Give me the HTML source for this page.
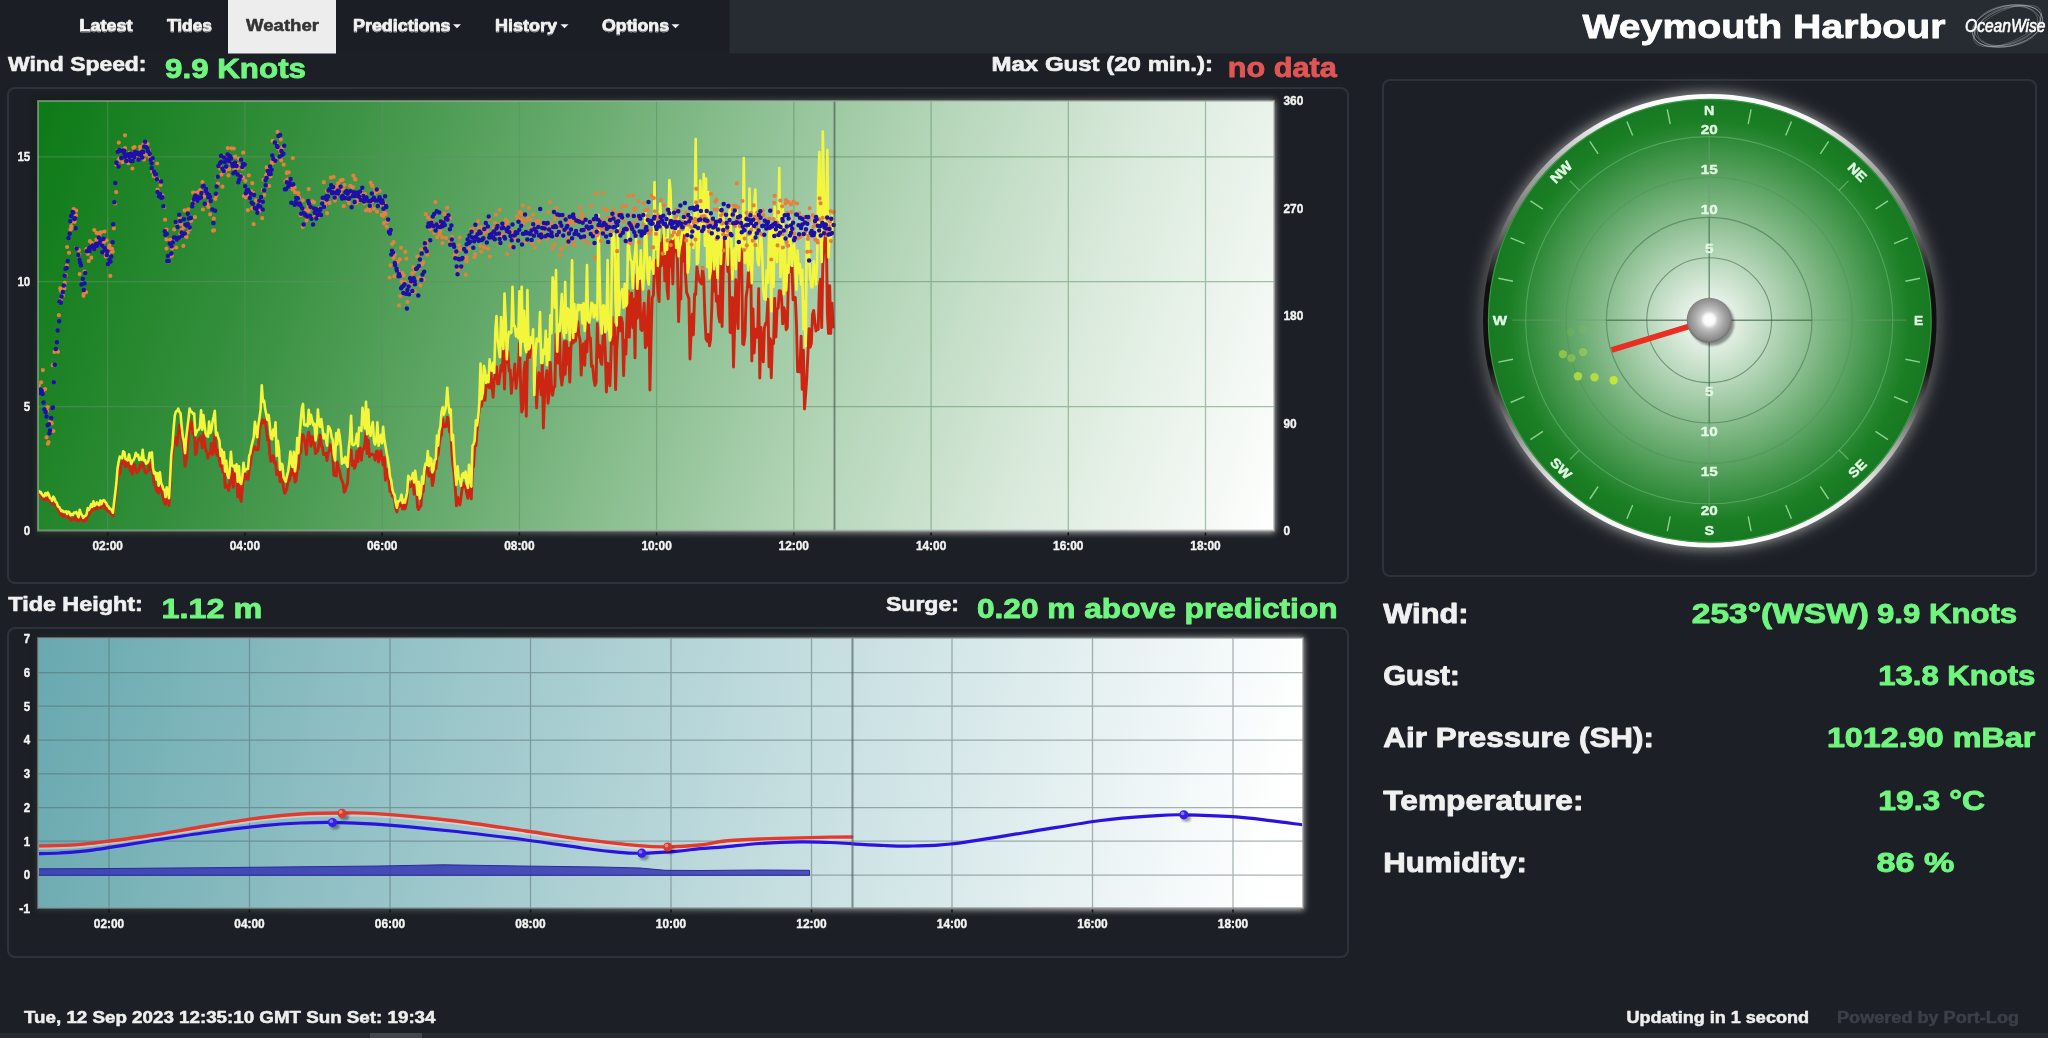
<!DOCTYPE html>
<html><head><meta charset="utf-8"><title>Weymouth Harbour</title>
<style>
html,body{margin:0;padding:0;background:#1c1f25;overflow:hidden;}
body{width:2048px;height:1038px;font-family:"Liberation Sans", sans-serif;}
svg{display:block;position:absolute;left:0;top:0;will-change:transform;}
text{font-family:"Liberation Sans", sans-serif;white-space:pre;}
</style></head><body>
<svg width="2048" height="1038" viewBox="0 0 2048 1038">
<defs>
<linearGradient id="gWind" gradientUnits="userSpaceOnUse" x1="38" y1="101" x2="1275" y2="531">
<stop offset="0" stop-color="#0c7a16"/><stop offset="0.2" stop-color="#358f3d"/><stop offset="0.4" stop-color="#69ac6f"/><stop offset="0.65" stop-color="#b3d5b7"/><stop offset="0.8" stop-color="#d8e9da"/><stop offset="1" stop-color="#ffffff"/>
</linearGradient>
<linearGradient id="gTide" gradientUnits="userSpaceOnUse" x1="38" y1="638" x2="1303" y2="908">
<stop offset="0" stop-color="#68a9af"/><stop offset="0.97" stop-color="#ffffff"/>
</linearGradient>
<radialGradient id="gComp" gradientUnits="userSpaceOnUse" cx="1709.6" cy="320.6" r="222">
<stop offset="0" stop-color="#ffffff"/><stop offset="0.9" stop-color="#1b7f25"/><stop offset="1" stop-color="#177821"/>
</radialGradient>
<linearGradient id="gRim" x1="0" y1="0" x2="0" y2="1">
<stop offset="0" stop-color="#ffffff"/><stop offset="0.06" stop-color="#f4f4f4"/><stop offset="0.15" stop-color="#b0b0b0"/><stop offset="0.3" stop-color="#6a6a6a"/><stop offset="0.42" stop-color="#101010"/><stop offset="0.6" stop-color="#101010"/><stop offset="0.7" stop-color="#666"/><stop offset="0.78" stop-color="#aaa"/><stop offset="0.86" stop-color="#e8e8e8"/><stop offset="1" stop-color="#ffffff"/>
</linearGradient>
<radialGradient id="gHub" cx="0.5" cy="0.48" r="0.52">
<stop offset="0" stop-color="#ffffff"/><stop offset="0.3" stop-color="#d4d4d4"/><stop offset="0.6" stop-color="#ababab"/><stop offset="0.88" stop-color="#8c8c8c"/><stop offset="1" stop-color="#6a6a6a"/>
</radialGradient>
<linearGradient id="gGlowW" x1="0" y1="0" x2="1" y2="0.35"><stop offset="0" stop-color="#0c7a16" stop-opacity="0.25"/><stop offset="0.5" stop-color="#9fd0a3" stop-opacity="0.4"/><stop offset="1" stop-color="#ffffff" stop-opacity="0.75"/></linearGradient>
<linearGradient id="gGlowT" x1="0" y1="0" x2="1" y2="0.2"><stop offset="0" stop-color="#68a9af" stop-opacity="0.2"/><stop offset="0.5" stop-color="#b9d8da" stop-opacity="0.4"/><stop offset="1" stop-color="#ffffff" stop-opacity="0.75"/></linearGradient>
<filter id="fGlow" x="-20%" y="-20%" width="140%" height="140%"><feGaussianBlur stdDeviation="5"/></filter>
<filter id="fGlow2" x="-20%" y="-20%" width="140%" height="140%"><feGaussianBlur stdDeviation="8"/></filter>
<filter id="fShadow" x="-5%" y="-5%" width="110%" height="110%"><feGaussianBlur stdDeviation="3"/></filter>
<filter id="fSoft" x="-50%" y="-50%" width="200%" height="200%"><feGaussianBlur stdDeviation="1.2"/></filter>
<clipPath id="cWind"><rect x="39" y="102" width="1235" height="428"/></clipPath>
<clipPath id="cTide"><rect x="39" y="639" width="1263" height="268"/></clipPath>
</defs>

<rect x="0" y="0" width="2048" height="1038" fill="#1c1f25"/>
<rect x="0" y="0" width="2048" height="53.5" fill="#272b32"/>
<rect x="0" y="0" width="729.5" height="53.5" fill="#1b1e24"/>
<rect x="228" y="0" width="108" height="53.5" fill="#ededed"/>
<rect x="0" y="1033" width="2048" height="5" fill="#26292f"/>
<rect x="370" y="1033" width="52" height="5" fill="#43464c"/>
<text x="79.5" y="32.0" font-size="15.6" font-weight="bold" fill="#000000" textLength="53.0" lengthAdjust="spacingAndGlyphs"  stroke="#f2f2f2" stroke-width="0.50" stroke-linejoin="round">Latest</text><text x="79.5" y="31.0" font-size="15.6" font-weight="bold" fill="#f2f2f2" textLength="53.0" lengthAdjust="spacingAndGlyphs"  stroke="#f2f2f2" stroke-width="0.50" stroke-linejoin="round">Latest</text>
<text x="167.0" y="32.0" font-size="15.6" font-weight="bold" fill="#000000" textLength="45.0" lengthAdjust="spacingAndGlyphs"  stroke="#f2f2f2" stroke-width="0.50" stroke-linejoin="round">Tides</text><text x="167.0" y="31.0" font-size="15.6" font-weight="bold" fill="#f2f2f2" textLength="45.0" lengthAdjust="spacingAndGlyphs"  stroke="#f2f2f2" stroke-width="0.50" stroke-linejoin="round">Tides</text>
<text x="246.0" y="31.0" font-size="15.6" font-weight="bold" fill="#333333" textLength="73.0" lengthAdjust="spacingAndGlyphs"  stroke="#333333" stroke-width="0.50" stroke-linejoin="round">Weather</text>
<text x="353.0" y="32.0" font-size="15.6" font-weight="bold" fill="#000000" textLength="97.5" lengthAdjust="spacingAndGlyphs"  stroke="#f2f2f2" stroke-width="0.50" stroke-linejoin="round">Predictions</text><text x="353.0" y="31.0" font-size="15.6" font-weight="bold" fill="#f2f2f2" textLength="97.5" lengthAdjust="spacingAndGlyphs"  stroke="#f2f2f2" stroke-width="0.50" stroke-linejoin="round">Predictions</text>
<text x="495.0" y="32.0" font-size="15.6" font-weight="bold" fill="#000000" textLength="62.0" lengthAdjust="spacingAndGlyphs"  stroke="#f2f2f2" stroke-width="0.50" stroke-linejoin="round">History</text><text x="495.0" y="31.0" font-size="15.6" font-weight="bold" fill="#f2f2f2" textLength="62.0" lengthAdjust="spacingAndGlyphs"  stroke="#f2f2f2" stroke-width="0.50" stroke-linejoin="round">History</text>
<text x="602.0" y="32.0" font-size="15.6" font-weight="bold" fill="#000000" textLength="67.0" lengthAdjust="spacingAndGlyphs"  stroke="#f2f2f2" stroke-width="0.50" stroke-linejoin="round">Options</text><text x="602.0" y="31.0" font-size="15.6" font-weight="bold" fill="#f2f2f2" textLength="67.0" lengthAdjust="spacingAndGlyphs"  stroke="#f2f2f2" stroke-width="0.50" stroke-linejoin="round">Options</text>
<path d="M453,24.3 h8 l-4,4 z" fill="#f2f2f2"/>
<path d="M560.5,24.3 h8 l-4,4 z" fill="#f2f2f2"/>
<path d="M671.5,24.3 h8 l-4,4 z" fill="#f2f2f2"/>
<text x="1582.5" y="38.0" font-size="33" font-weight="bold" fill="#ffffff" textLength="363.0" lengthAdjust="spacingAndGlyphs"  stroke="#ffffff" stroke-width="0.80" stroke-linejoin="round">Weymouth Harbour</text>
<text x="8.0" y="71.2" font-size="21" font-weight="bold" fill="#f0f0f0" textLength="138.5" lengthAdjust="spacingAndGlyphs"  stroke="#f0f0f0" stroke-width="0.67" stroke-linejoin="round">Wind Speed:</text>
<text x="165.0" y="77.8" font-size="28" font-weight="bold" fill="#70f57f" textLength="141.0" lengthAdjust="spacingAndGlyphs"  stroke="#70f57f" stroke-width="0.90" stroke-linejoin="round">9.9 Knots</text>
<text x="991.5" y="71.2" font-size="21" font-weight="bold" fill="#f0f0f0" textLength="221.5" lengthAdjust="spacingAndGlyphs"  stroke="#f0f0f0" stroke-width="0.67" stroke-linejoin="round">Max Gust (20 min.):</text>
<text x="1227.7" y="77.3" font-size="28" font-weight="bold" fill="#e15555" textLength="109.0" lengthAdjust="spacingAndGlyphs"  stroke="#e15555" stroke-width="0.90" stroke-linejoin="round">no data</text>
<text x="8.3" y="610.8" font-size="21" font-weight="bold" fill="#f0f0f0" textLength="134.5" lengthAdjust="spacingAndGlyphs"  stroke="#f0f0f0" stroke-width="0.67" stroke-linejoin="round">Tide Height:</text>
<text x="161.6" y="617.6" font-size="28" font-weight="bold" fill="#70f57f" textLength="100.7" lengthAdjust="spacingAndGlyphs"  stroke="#70f57f" stroke-width="0.90" stroke-linejoin="round">1.12 m</text>
<text x="886.0" y="610.8" font-size="21" font-weight="bold" fill="#f0f0f0" textLength="72.9" lengthAdjust="spacingAndGlyphs"  stroke="#f0f0f0" stroke-width="0.67" stroke-linejoin="round">Surge:</text>
<text x="976.9" y="617.6" font-size="28" font-weight="bold" fill="#70f57f" textLength="360.7" lengthAdjust="spacingAndGlyphs"  stroke="#70f57f" stroke-width="0.90" stroke-linejoin="round">0.20 m above prediction</text>
<text x="1383.3" y="622.6" font-size="28" font-weight="bold" fill="#f0f0f0" textLength="85.2" lengthAdjust="spacingAndGlyphs"  stroke="#f0f0f0" stroke-width="0.90" stroke-linejoin="round">Wind:</text>
<text x="1383.3" y="685.0" font-size="28" font-weight="bold" fill="#f0f0f0" textLength="76.4" lengthAdjust="spacingAndGlyphs"  stroke="#f0f0f0" stroke-width="0.90" stroke-linejoin="round">Gust:</text>
<text x="1383.3" y="747.3" font-size="28" font-weight="bold" fill="#f0f0f0" textLength="270.7" lengthAdjust="spacingAndGlyphs"  stroke="#f0f0f0" stroke-width="0.90" stroke-linejoin="round">Air Pressure (SH):</text>
<text x="1383.3" y="809.5" font-size="28" font-weight="bold" fill="#f0f0f0" textLength="200.2" lengthAdjust="spacingAndGlyphs"  stroke="#f0f0f0" stroke-width="0.90" stroke-linejoin="round">Temperature:</text>
<text x="1383.3" y="871.5" font-size="28" font-weight="bold" fill="#f0f0f0" textLength="143.7" lengthAdjust="spacingAndGlyphs"  stroke="#f0f0f0" stroke-width="0.90" stroke-linejoin="round">Humidity:</text>
<text x="1691.8" y="622.6" font-size="28" font-weight="bold" fill="#70f57f" textLength="177.2" lengthAdjust="spacingAndGlyphs"  stroke="#70f57f" stroke-width="0.90" stroke-linejoin="round">253°(WSW)</text>
<text x="1877.0" y="622.6" font-size="28" font-weight="bold" fill="#70f57f" textLength="140.2" lengthAdjust="spacingAndGlyphs"  stroke="#70f57f" stroke-width="0.90" stroke-linejoin="round">9.9 Knots</text>
<text x="1878.2" y="685.0" font-size="28" font-weight="bold" fill="#70f57f" textLength="157.2" lengthAdjust="spacingAndGlyphs"  stroke="#70f57f" stroke-width="0.90" stroke-linejoin="round">13.8 Knots</text>
<text x="1826.9" y="747.3" font-size="28" font-weight="bold" fill="#70f57f" textLength="208.5" lengthAdjust="spacingAndGlyphs"  stroke="#70f57f" stroke-width="0.90" stroke-linejoin="round">1012.90 mBar</text>
<text x="1878.2" y="809.5" font-size="28" font-weight="bold" fill="#70f57f" textLength="106.8" lengthAdjust="spacingAndGlyphs"  stroke="#70f57f" stroke-width="0.90" stroke-linejoin="round">19.3 °C</text>
<text x="1876.5" y="871.5" font-size="28" font-weight="bold" fill="#70f57f" textLength="77.8" lengthAdjust="spacingAndGlyphs"  stroke="#70f57f" stroke-width="0.90" stroke-linejoin="round">86 %</text>
<text x="24.0" y="1023.0" font-size="16" font-weight="bold" fill="#eeeeee" textLength="411.5" lengthAdjust="spacingAndGlyphs"  stroke="#eeeeee" stroke-width="0.51" stroke-linejoin="round">Tue, 12 Sep 2023 12:35:10 GMT Sun Set: 19:34</text>
<text x="1626.5" y="1023.0" font-size="16" font-weight="bold" fill="#eeeeee" textLength="182.5" lengthAdjust="spacingAndGlyphs"  stroke="#eeeeee" stroke-width="0.51" stroke-linejoin="round">Updating in 1 second</text>
<text x="1837.0" y="1023.0" font-size="16" font-weight="bold" fill="#3b3f47" textLength="182.0" lengthAdjust="spacingAndGlyphs"  stroke="#3b3f47" stroke-width="0.51" stroke-linejoin="round">Powered by Port-Log</text>
<rect x="8" y="88" width="1340" height="495" rx="7" ry="7" fill="#1c1f25" stroke="#2e323b" stroke-width="2"/>
<rect x="8" y="628" width="1340" height="329" rx="7" ry="7" fill="#1c1f25" stroke="#2e323b" stroke-width="2"/>
<rect x="1383" y="80" width="653" height="496" rx="7" ry="7" fill="#1c1f25" stroke="#2e323b" stroke-width="2"/>
<rect x="36" y="99" width="1240" height="433.5" fill="#000" opacity="0.45" filter="url(#fShadow)"/>
<rect x="37" y="100" width="1238" height="432.5" fill="url(#gGlowW)" filter="url(#fShadow)"/>
<rect x="38" y="101" width="1236" height="429.5" fill="url(#gWind)"/>
<path d="M107.7,101V530.5 M244.9,101V530.5 M382.2,101V530.5 M519.4,101V530.5 M656.6,101V530.5 M793.9,101V530.5 M931.1,101V530.5 M1068.3,101V530.5 M1205.5,101V530.5 M38,156.9H1274 M38,281.7H1274 M38,406.5H1274" stroke="#5f8f65" stroke-opacity="0.55" stroke-width="1.25" fill="none"/>
<g clip-path="url(#cWind)">
<path d="M38.5,494.1 L39.6,495.0 L40.8,494.8 L41.9,497.7 L43.1,499.4 L44.2,499.8 L45.4,497.6 L46.5,499.7 L47.7,498.2 L48.8,498.8 L50.0,501.1 L51.1,502.9 L52.2,503.9 L53.4,503.4 L54.5,505.1 L55.7,504.7 L56.8,505.5 L58.0,509.6 L59.1,511.5 L60.3,513.7 L61.4,514.5 L62.5,516.1 L63.7,516.5 L64.8,513.9 L66.0,515.4 L67.1,517.2 L68.3,515.3 L69.4,517.6 L70.6,520.0 L71.7,519.4 L72.9,519.9 L74.0,518.7 L75.1,517.5 L76.3,520.3 L77.4,517.7 L78.6,521.0 L79.7,517.6 L80.9,519.5 L82.0,518.2 L83.2,521.2 L84.3,520.1 L85.4,520.9 L86.6,518.9 L87.7,514.0 L88.9,514.9 L90.0,510.0 L91.2,511.4 L92.3,510.2 L93.5,507.6 L94.6,509.0 L95.7,509.0 L96.9,508.3 L98.0,506.4 L99.2,507.9 L100.3,505.2 L101.5,507.3 L102.6,503.4 L103.8,503.1 L104.9,507.2 L106.1,509.8 L107.2,508.3 L108.3,511.5 L109.5,512.4 L110.6,513.2 L111.8,513.8 L112.9,516.0 L114.1,507.5 L115.2,499.3 L116.4,487.4 L117.5,476.5 L118.6,469.3 L119.8,474.2 L120.9,464.2 L122.1,463.9 L123.2,459.4 L124.4,458.8 L125.5,466.8 L126.7,464.6 L127.8,465.7 L129.0,460.1 L130.1,470.5 L131.2,471.3 L132.4,474.2 L133.5,464.6 L134.7,464.8 L135.8,470.3 L137.0,472.6 L138.1,471.5 L139.3,468.2 L140.4,464.7 L141.5,466.4 L142.7,462.9 L143.8,467.2 L145.0,472.0 L146.1,473.2 L147.3,471.5 L148.4,470.5 L149.6,462.9 L150.7,469.1 L151.9,465.5 L153.0,474.5 L154.1,484.2 L155.3,484.9 L156.4,491.2 L157.6,487.2 L158.7,493.3 L159.9,483.2 L161.0,487.2 L162.2,492.0 L163.3,499.9 L164.5,502.7 L165.6,504.6 L166.7,497.9 L167.9,498.3 L169.0,505.2 L170.2,482.1 L171.3,463.2 L172.5,454.0 L173.6,443.1 L174.8,441.2 L175.9,437.3 L177.0,445.4 L178.2,434.7 L179.3,425.5 L180.5,429.4 L181.6,435.1 L182.8,445.0 L183.9,452.0 L185.1,466.3 L186.2,460.2 L187.4,448.5 L188.5,437.0 L189.6,419.7 L190.8,428.9 L191.9,422.8 L193.1,433.5 L194.2,431.0 L195.4,454.6 L196.5,452.0 L197.7,441.7 L198.8,439.2 L199.9,437.9 L201.1,436.5 L202.2,447.9 L203.4,433.7 L204.5,441.4 L205.7,449.9 L206.8,452.4 L208.0,458.2 L209.1,453.3 L210.3,453.6 L211.4,443.5 L212.5,454.7 L213.7,449.0 L214.8,433.9 L216.0,450.9 L217.1,455.5 L218.3,449.9 L219.4,460.3 L220.6,466.6 L221.7,460.0 L222.8,472.1 L224.0,464.7 L225.1,487.5 L226.3,486.3 L227.4,485.1 L228.6,490.5 L229.7,484.1 L230.9,464.9 L232.0,474.0 L233.2,487.1 L234.3,472.2 L235.4,478.9 L236.6,477.1 L237.7,497.0 L238.9,480.8 L240.0,496.5 L241.2,501.5 L242.3,489.2 L243.5,471.0 L244.6,479.3 L245.7,474.7 L246.9,478.5 L248.0,479.3 L249.2,469.4 L250.3,465.0 L251.5,454.9 L252.6,451.5 L253.8,448.9 L254.9,446.8 L256.1,449.4 L257.2,449.9 L258.3,449.3 L259.5,429.1 L260.6,425.9 L261.8,422.1 L262.9,419.7 L264.1,423.0 L265.2,420.6 L266.4,428.7 L267.5,440.0 L268.6,437.1 L269.8,454.5 L270.9,461.4 L272.1,458.3 L273.2,455.5 L274.4,463.1 L275.5,461.8 L276.7,474.7 L277.8,473.3 L279.0,470.7 L280.1,481.8 L281.2,471.4 L282.4,479.8 L283.5,487.8 L284.7,493.3 L285.8,491.6 L287.0,487.9 L288.1,479.7 L289.3,480.4 L290.4,475.4 L291.5,469.3 L292.7,474.8 L293.8,469.3 L295.0,482.0 L296.1,480.6 L297.3,468.0 L298.4,468.4 L299.6,445.1 L300.7,453.0 L301.9,435.2 L303.0,434.8 L304.1,438.8 L305.3,444.4 L306.4,454.5 L307.6,437.9 L308.7,432.2 L309.9,438.1 L311.0,446.3 L312.2,436.6 L313.3,440.9 L314.4,444.7 L315.6,453.6 L316.7,452.0 L317.9,450.5 L319.0,443.2 L320.2,435.3 L321.3,445.5 L322.5,447.5 L323.6,454.6 L324.7,454.3 L325.9,453.4 L327.0,460.6 L328.2,452.2 L329.3,451.1 L330.5,444.6 L331.6,446.7 L332.8,456.6 L333.9,475.1 L335.1,475.6 L336.2,476.0 L337.3,462.0 L338.5,468.2 L339.6,470.9 L340.8,477.6 L341.9,480.4 L343.1,483.5 L344.2,492.3 L345.4,490.5 L346.5,486.0 L347.6,482.7 L348.8,462.2 L349.9,459.8 L351.1,449.9 L352.2,465.5 L353.4,461.0 L354.5,468.2 L355.7,465.1 L356.8,451.5 L358.0,461.6 L359.1,449.1 L360.2,447.8 L361.4,460.2 L362.5,449.4 L363.7,449.2 L364.8,444.0 L366.0,432.4 L367.1,453.6 L368.3,440.1 L369.4,456.7 L370.5,454.8 L371.7,453.8 L372.8,454.9 L374.0,455.1 L375.1,460.2 L376.3,451.4 L377.4,451.0 L378.6,462.0 L379.7,457.0 L380.9,450.7 L382.0,458.5 L383.1,465.0 L384.3,457.5 L385.4,480.2 L386.6,469.3 L387.7,474.3 L388.9,480.5 L390.0,491.5 L391.2,486.2 L392.3,496.2 L393.4,496.0 L394.6,500.0 L395.7,508.1 L396.9,511.9 L398.0,504.1 L399.2,506.8 L400.3,505.2 L401.5,500.3 L402.6,509.0 L403.8,505.2 L404.9,508.9 L406.0,505.2 L407.2,497.3 L408.3,483.3 L409.5,487.0 L410.6,486.5 L411.8,485.1 L412.9,478.4 L414.1,494.2 L415.2,488.9 L416.3,486.4 L417.5,507.0 L418.6,509.6 L419.8,506.4 L420.9,506.1 L422.1,491.4 L423.2,491.8 L424.4,476.7 L425.5,472.7 L426.7,471.7 L427.8,466.7 L428.9,476.2 L430.1,474.7 L431.2,472.8 L432.4,485.6 L433.5,480.2 L434.7,466.7 L435.8,468.5 L437.0,456.4 L438.1,454.9 L439.2,444.2 L440.4,436.6 L441.5,434.9 L442.7,418.9 L443.8,426.7 L445.0,426.7 L446.1,426.6 L447.3,417.1 L448.4,418.0 L449.6,432.1 L450.7,430.0 L451.8,450.8 L453.0,465.7 L454.1,473.4 L455.3,488.6 L456.4,505.9 L457.6,497.3 L458.7,501.6 L459.9,504.9 L461.0,497.4 L462.1,488.8 L463.3,483.1 L464.4,486.9 L465.6,486.7 L466.7,493.3 L467.9,498.3 L469.0,482.6 L470.2,491.0 L471.3,498.9 L472.5,467.8 L473.6,466.8 L474.7,445.0 L475.9,445.7 L477.0,431.1 L478.2,419.4 L479.3,408.8 L480.5,405.4 L481.6,406.2 L482.8,395.4 L483.9,399.0 L485.0,400.4 L486.2,384.4 L487.3,380.7 L488.5,386.5 L489.6,387.9 L490.8,371.6 L491.9,385.4 L493.1,397.2 L494.2,380.2 L495.4,373.7 L496.5,366.8 L497.6,383.8 L498.8,383.9 L499.9,375.3 L501.1,365.4 L502.2,370.9 L503.4,351.3 L504.5,389.0 L505.7,342.6 L506.8,362.8 L507.9,351.2 L509.1,371.1 L510.2,369.8 L511.4,393.4 L512.5,378.9 L513.7,379.3 L514.8,364.0 L516.0,388.4 L517.1,377.4 L518.3,372.5 L519.4,343.3 L520.5,381.2 L521.7,412.1 L522.8,408.9 L524.0,371.5 L525.1,362.1 L526.3,416.3 L527.4,358.3 L528.6,350.9 L529.7,357.4 L530.8,338.7 L532.0,344.4 L533.1,350.3 L534.3,374.2 L535.4,367.5 L536.6,407.9 L537.7,385.3 L538.9,372.7 L540.0,382.0 L541.2,394.9 L542.3,364.4 L543.4,428.0 L544.6,394.7 L545.7,378.7 L546.9,370.6 L548.0,403.3 L549.2,392.7 L550.3,362.4 L551.5,386.5 L552.6,395.3 L553.7,387.5 L554.9,386.4 L556.0,334.5 L557.2,361.6 L558.3,363.0 L559.5,332.6 L560.6,374.6 L561.8,385.0 L562.9,376.4 L564.1,341.8 L565.2,374.4 L566.3,341.1 L567.5,364.0 L568.6,348.2 L569.8,382.1 L570.9,348.1 L572.1,335.1 L573.2,343.0 L574.4,320.4 L575.5,341.1 L576.6,330.4 L577.8,321.8 L578.9,334.7 L580.1,340.1 L581.2,375.1 L582.4,349.6 L583.5,343.6 L584.7,365.3 L585.8,341.2 L587.0,351.8 L588.1,321.7 L589.2,338.5 L590.4,338.1 L591.5,366.5 L592.7,365.8 L593.8,378.7 L595.0,385.4 L596.1,382.3 L597.3,323.6 L598.4,356.8 L599.5,345.3 L600.7,361.6 L601.8,364.4 L603.0,337.0 L604.1,326.2 L605.3,352.9 L606.4,392.0 L607.6,363.2 L608.7,368.4 L609.9,385.7 L611.0,354.6 L612.1,317.2 L613.3,343.7 L614.4,325.0 L615.6,389.6 L616.7,349.6 L617.9,331.3 L619.0,316.4 L620.2,330.8 L621.3,317.7 L622.4,322.6 L623.6,375.6 L624.7,340.5 L625.9,354.1 L627.0,318.2 L628.2,290.6 L629.3,337.3 L630.5,304.9 L631.6,292.9 L632.8,327.8 L633.9,299.3 L635.0,357.9 L636.2,275.2 L637.3,318.2 L638.5,309.9 L639.6,280.3 L640.8,329.1 L641.9,330.5 L643.1,316.4 L644.2,303.3 L645.3,347.8 L646.5,345.6 L647.6,316.3 L648.8,291.0 L649.9,390.0 L651.1,336.5 L652.2,298.0 L653.4,294.9 L654.5,266.1 L655.7,260.4 L656.8,270.1 L657.9,291.0 L659.1,301.6 L660.2,243.5 L661.4,265.7 L662.5,242.6 L663.7,234.6 L664.8,280.9 L666.0,239.7 L667.1,288.9 L668.2,298.8 L669.4,242.4 L670.5,266.3 L671.7,240.9 L672.8,284.0 L674.0,233.4 L675.1,229.4 L676.3,249.4 L677.4,259.6 L678.6,321.6 L679.7,289.7 L680.8,299.0 L682.0,233.4 L683.1,261.1 L684.3,234.7 L685.4,273.2 L686.6,292.5 L687.7,295.1 L688.9,298.7 L690.0,359.0 L691.1,333.9 L692.3,314.1 L693.4,334.8 L694.6,294.0 L695.7,294.5 L696.9,267.0 L698.0,274.6 L699.2,280.1 L700.3,282.4 L701.5,283.9 L702.6,267.6 L703.7,278.4 L704.9,316.1 L706.0,338.8 L707.2,341.2 L708.3,334.5 L709.5,345.8 L710.6,338.9 L711.8,307.3 L712.9,262.9 L714.0,291.3 L715.2,267.1 L716.3,301.2 L717.5,295.9 L718.6,315.8 L719.8,321.9 L720.9,265.4 L722.1,326.5 L723.2,271.9 L724.4,230.0 L725.5,227.9 L726.6,242.4 L727.8,271.5 L728.9,248.9 L730.1,332.4 L731.2,332.8 L732.4,297.5 L733.5,367.0 L734.7,323.7 L735.8,279.7 L736.9,309.7 L738.1,328.6 L739.2,262.3 L740.4,254.8 L741.5,244.2 L742.7,343.8 L743.8,344.6 L745.0,335.1 L746.1,297.2 L747.3,288.7 L748.4,272.0 L749.5,286.7 L750.7,256.7 L751.8,361.0 L753.0,309.0 L754.1,353.0 L755.3,333.5 L756.4,328.9 L757.6,337.2 L758.7,288.6 L759.8,378.0 L761.0,327.5 L762.1,349.8 L763.3,361.9 L764.4,327.9 L765.6,323.6 L766.7,321.7 L767.9,299.2 L769.0,366.7 L770.2,338.7 L771.3,377.7 L772.4,341.0 L773.6,343.5 L774.7,298.4 L775.9,337.0 L777.0,309.1 L778.2,308.1 L779.3,290.7 L780.5,291.0 L781.6,298.3 L782.7,323.9 L783.9,307.8 L785.0,311.7 L786.2,329.7 L787.3,327.6 L788.5,274.1 L789.6,267.4 L790.8,271.7 L791.9,267.3 L793.1,299.9 L794.2,297.7 L795.3,297.4 L796.5,324.5 L797.6,371.7 L798.8,361.4 L799.9,372.1 L801.1,336.1 L802.2,389.4 L803.4,350.2 L804.5,409.0 L805.6,394.9 L806.8,377.3 L807.9,353.7 L809.1,328.7 L810.2,347.2 L811.4,343.2 L812.5,314.7 L813.7,310.4 L814.8,321.1 L816.0,331.0 L817.1,326.5 L818.2,329.5 L819.4,286.3 L820.5,279.1 L821.7,327.6 L822.8,265.7 L824.0,246.7 L825.1,238.0 L826.3,232.2 L827.4,313.8 L828.5,333.5 L829.7,285.7 L830.8,333.5 L832.0,303.2 L833.1,328.3" fill="none" stroke="#cc2612" stroke-width="2.9" stroke-linejoin="round"/>
<path d="M38.5,490.5 L39.6,492.3 L40.8,492.1 L41.9,494.3 L43.1,495.8 L44.2,496.4 L45.4,493.1 L46.5,495.4 L47.7,492.5 L48.8,494.6 L50.0,498.1 L51.1,498.6 L52.2,500.9 L53.4,496.7 L54.5,498.4 L55.7,501.9 L56.8,502.8 L58.0,506.6 L59.1,506.9 L60.3,509.2 L61.4,511.1 L62.5,510.5 L63.7,511.9 L64.8,511.9 L66.0,511.3 L67.1,514.0 L68.3,511.5 L69.4,512.3 L70.6,515.4 L71.7,514.1 L72.9,514.9 L74.0,512.5 L75.1,512.9 L76.3,511.9 L77.4,514.5 L78.6,517.2 L79.7,509.7 L80.9,513.6 L82.0,514.9 L83.2,517.8 L84.3,516.2 L85.4,516.0 L86.6,514.2 L87.7,508.1 L88.9,509.9 L90.0,507.3 L91.2,504.2 L92.3,506.8 L93.5,501.3 L94.6,505.7 L95.7,504.6 L96.9,502.4 L98.0,504.2 L99.2,505.2 L100.3,500.6 L101.5,504.1 L102.6,500.8 L103.8,500.0 L104.9,501.6 L106.1,502.8 L107.2,505.5 L108.3,506.4 L109.5,508.7 L110.6,508.9 L111.8,510.1 L112.9,512.7 L114.1,502.2 L115.2,493.4 L116.4,482.5 L117.5,468.6 L118.6,462.0 L119.8,456.5 L120.9,457.3 L122.1,458.4 L123.2,451.4 L124.4,452.3 L125.5,459.1 L126.7,459.2 L127.8,460.4 L129.0,454.4 L130.1,459.4 L131.2,464.0 L132.4,460.6 L133.5,460.2 L134.7,457.5 L135.8,452.7 L137.0,455.8 L138.1,454.9 L139.3,460.0 L140.4,457.9 L141.5,459.6 L142.7,449.8 L143.8,460.4 L145.0,460.0 L146.1,463.6 L147.3,462.9 L148.4,461.0 L149.6,452.7 L150.7,457.5 L151.9,452.3 L153.0,468.1 L154.1,473.4 L155.3,472.3 L156.4,479.5 L157.6,473.2 L158.7,485.7 L159.9,472.3 L161.0,482.5 L162.2,485.4 L163.3,489.2 L164.5,490.1 L165.6,497.0 L166.7,487.4 L167.9,491.0 L169.0,498.2 L170.2,476.4 L171.3,454.9 L172.5,444.7 L173.6,428.7 L174.8,415.7 L175.9,411.5 L177.0,411.3 L178.2,408.7 L179.3,411.6 L180.5,413.2 L181.6,425.5 L182.8,436.7 L183.9,441.3 L185.1,453.1 L186.2,437.4 L187.4,427.8 L188.5,419.0 L189.6,408.5 L190.8,411.4 L191.9,412.0 L193.1,413.7 L194.2,413.6 L195.4,435.3 L196.5,432.3 L197.7,430.1 L198.8,429.8 L199.9,426.7 L201.1,410.3 L202.2,429.8 L203.4,415.0 L204.5,424.3 L205.7,433.8 L206.8,435.9 L208.0,436.7 L209.1,421.6 L210.3,433.0 L211.4,430.0 L212.5,421.9 L213.7,416.6 L214.8,410.7 L216.0,435.1 L217.1,432.7 L218.3,437.8 L219.4,440.4 L220.6,456.0 L221.7,449.5 L222.8,463.3 L224.0,452.0 L225.1,471.5 L226.3,460.9 L227.4,474.5 L228.6,478.0 L229.7,471.2 L230.9,451.9 L232.0,465.5 L233.2,466.5 L234.3,465.6 L235.4,471.3 L236.6,464.4 L237.7,481.7 L238.9,466.2 L240.0,482.3 L241.2,483.9 L242.3,477.4 L243.5,462.9 L244.6,471.4 L245.7,469.5 L246.9,468.9 L248.0,468.9 L249.2,455.8 L250.3,453.2 L251.5,446.0 L252.6,441.7 L253.8,436.7 L254.9,421.9 L256.1,429.3 L257.2,437.3 L258.3,425.4 L259.5,417.5 L260.6,409.4 L261.8,385.3 L262.9,401.6 L264.1,400.7 L265.2,409.3 L266.4,415.0 L267.5,420.0 L268.6,414.9 L269.8,425.5 L270.9,438.2 L272.1,439.4 L273.2,429.5 L274.4,435.6 L275.5,422.4 L276.7,456.0 L277.8,440.8 L279.0,449.6 L280.1,470.0 L281.2,463.5 L282.4,464.5 L283.5,477.0 L284.7,479.9 L285.8,481.6 L287.0,475.3 L288.1,471.5 L289.3,462.8 L290.4,451.5 L291.5,462.6 L292.7,466.8 L293.8,451.8 L295.0,471.3 L296.1,462.0 L297.3,438.0 L298.4,453.1 L299.6,435.7 L300.7,421.0 L301.9,408.1 L303.0,403.9 L304.1,424.9 L305.3,425.4 L306.4,424.5 L307.6,426.1 L308.7,409.9 L309.9,424.0 L311.0,414.9 L312.2,420.9 L313.3,425.3 L314.4,423.5 L315.6,440.4 L316.7,432.7 L317.9,409.6 L319.0,423.6 L320.2,426.7 L321.3,419.1 L322.5,428.6 L323.6,438.4 L324.7,434.2 L325.9,438.9 L327.0,445.6 L328.2,426.2 L329.3,427.4 L330.5,430.2 L331.6,437.0 L332.8,440.3 L333.9,455.0 L335.1,460.5 L336.2,433.1 L337.3,444.5 L338.5,429.6 L339.6,435.4 L340.8,446.3 L341.9,463.7 L343.1,458.7 L344.2,462.6 L345.4,456.9 L346.5,464.0 L347.6,466.9 L348.8,447.4 L349.9,438.0 L351.1,415.9 L352.2,444.4 L353.4,445.1 L354.5,444.4 L355.7,442.5 L356.8,433.9 L358.0,446.1 L359.1,427.6 L360.2,429.8 L361.4,430.9 L362.5,407.9 L363.7,418.9 L364.8,428.5 L366.0,401.9 L367.1,434.1 L368.3,409.6 L369.4,432.6 L370.5,435.9 L371.7,427.5 L372.8,422.1 L374.0,441.0 L375.1,444.5 L376.3,440.4 L377.4,422.4 L378.6,445.8 L379.7,439.1 L380.9,434.9 L382.0,443.3 L383.1,426.9 L384.3,439.0 L385.4,445.6 L386.6,452.7 L387.7,458.3 L388.9,466.2 L390.0,476.9 L391.2,480.5 L392.3,489.2 L393.4,493.0 L394.6,494.9 L395.7,502.5 L396.9,507.7 L398.0,501.3 L399.2,501.3 L400.3,499.5 L401.5,494.5 L402.6,503.0 L403.8,500.0 L404.9,502.6 L406.0,497.6 L407.2,492.2 L408.3,475.8 L409.5,478.2 L410.6,479.4 L411.8,478.3 L412.9,473.1 L414.1,482.4 L415.2,470.8 L416.3,479.5 L417.5,494.7 L418.6,481.7 L419.8,498.5 L420.9,493.0 L422.1,476.5 L423.2,483.6 L424.4,469.1 L425.5,463.5 L426.7,464.6 L427.8,451.1 L428.9,466.0 L430.1,457.9 L431.2,459.1 L432.4,472.4 L433.5,469.5 L434.7,459.9 L435.8,459.2 L437.0,435.6 L438.1,445.6 L439.2,430.9 L440.4,426.6 L441.5,412.2 L442.7,407.3 L443.8,414.6 L445.0,410.9 L446.1,404.7 L447.3,387.7 L448.4,403.8 L449.6,413.1 L450.7,409.4 L451.8,440.2 L453.0,434.7 L454.1,455.1 L455.3,472.2 L456.4,484.9 L457.6,466.4 L458.7,478.5 L459.9,479.5 L461.0,485.7 L462.1,474.7 L463.3,473.1 L464.4,478.0 L465.6,471.5 L466.7,483.5 L467.9,487.9 L469.0,464.7 L470.2,478.6 L471.3,486.6 L472.5,445.7 L473.6,444.3 L474.7,440.1 L475.9,420.3 L477.0,425.5 L478.2,416.6 L479.3,403.3 L480.5,363.5 L481.6,399.1 L482.8,392.4 L483.9,365.8 L485.0,370.8 L486.2,382.9 L487.3,375.6 L488.5,382.2 L489.6,359.4 L490.8,370.1 L491.9,370.6 L493.1,362.8 L494.2,372.8 L495.4,329.9 L496.5,316.1 L497.6,338.9 L498.8,349.2 L499.9,357.3 L501.1,317.0 L502.2,340.5 L503.4,349.0 L504.5,293.5 L505.7,319.4 L506.8,359.3 L507.9,338.9 L509.1,331.9 L510.2,333.5 L511.4,332.4 L512.5,286.8 L513.7,325.9 L514.8,326.1 L516.0,336.4 L517.1,329.0 L518.3,338.1 L519.4,291.2 L520.5,355.5 L521.7,286.8 L522.8,341.5 L524.0,310.7 L525.1,346.3 L526.3,352.2 L527.4,290.1 L528.6,349.4 L529.7,347.7 L530.8,337.2 L532.0,342.9 L533.1,329.2 L534.3,395.0 L535.4,357.5 L536.6,338.8 L537.7,338.9 L538.9,341.3 L540.0,312.0 L541.2,362.9 L542.3,362.9 L543.4,349.7 L544.6,353.7 L545.7,330.8 L546.9,365.2 L548.0,339.3 L549.2,359.8 L550.3,315.4 L551.5,333.2 L552.6,277.3 L553.7,288.4 L554.9,307.7 L556.0,270.1 L557.2,351.6 L558.3,324.9 L559.5,331.1 L560.6,315.8 L561.8,294.1 L562.9,328.5 L564.1,337.6 L565.2,282.1 L566.3,332.6 L567.5,308.3 L568.6,310.1 L569.8,340.1 L570.9,315.4 L572.1,260.3 L573.2,337.9 L574.4,304.1 L575.5,331.7 L576.6,320.5 L577.8,304.9 L578.9,309.9 L580.1,305.0 L581.2,305.0 L582.4,323.5 L583.5,303.3 L584.7,330.9 L585.8,315.1 L587.0,265.0 L588.1,320.2 L589.2,322.5 L590.4,315.7 L591.5,302.8 L592.7,303.8 L593.8,317.5 L595.0,305.4 L596.1,312.9 L597.3,319.8 L598.4,215.0 L599.5,271.8 L600.7,322.7 L601.8,333.5 L603.0,305.5 L604.1,305.6 L605.3,332.2 L606.4,329.7 L607.6,260.0 L608.7,322.7 L609.9,340.4 L611.0,335.5 L612.1,235.0 L613.3,233.3 L614.4,238.3 L615.6,304.1 L616.7,325.4 L617.9,226.4 L619.0,314.9 L620.2,294.6 L621.3,292.2 L622.4,289.0 L623.6,307.7 L624.7,283.7 L625.9,306.3 L627.0,303.6 L628.2,225.3 L629.3,250.6 L630.5,259.6 L631.6,261.6 L632.8,288.2 L633.9,263.6 L635.0,253.5 L636.2,238.4 L637.3,288.8 L638.5,267.9 L639.6,278.8 L640.8,250.3 L641.9,277.0 L643.1,289.5 L644.2,267.2 L645.3,211.3 L646.5,239.8 L647.6,278.0 L648.8,284.4 L649.9,257.4 L651.1,268.2 L652.2,261.9 L653.4,273.7 L654.5,182.0 L655.7,249.2 L656.8,214.4 L657.9,265.6 L659.1,233.8 L660.2,203.7 L661.4,225.9 L662.5,222.7 L663.7,224.4 L664.8,253.8 L666.0,238.2 L667.1,249.7 L668.2,227.0 L669.4,180.0 L670.5,190.4 L671.7,231.4 L672.8,238.9 L674.0,231.9 L675.1,227.9 L676.3,247.9 L677.4,217.1 L678.6,256.2 L679.7,247.8 L680.8,243.0 L682.0,231.9 L683.1,217.3 L684.3,233.2 L685.4,225.6 L686.6,217.6 L687.7,272.6 L688.9,265.7 L690.0,214.5 L691.1,216.3 L692.3,228.8 L693.4,248.0 L694.6,217.4 L695.7,139.0 L696.9,263.9 L698.0,263.2 L699.2,237.4 L700.3,180.5 L701.5,208.7 L702.6,228.8 L703.7,174.0 L704.9,245.7 L706.0,178.6 L707.2,266.9 L708.3,192.0 L709.5,278.4 L710.6,271.3 L711.8,228.4 L712.9,226.4 L714.0,269.2 L715.2,219.3 L716.3,253.2 L717.5,278.0 L718.6,232.7 L719.8,208.1 L720.9,263.9 L722.1,223.5 L723.2,216.9 L724.4,228.5 L725.5,226.4 L726.6,240.9 L727.8,264.6 L728.9,219.2 L730.1,207.1 L731.2,235.4 L732.4,278.9 L733.5,252.2 L734.7,248.4 L735.8,269.1 L736.9,210.4 L738.1,234.1 L739.2,260.8 L740.4,229.7 L741.5,242.7 L742.7,247.4 L743.8,158.0 L745.0,263.0 L746.1,261.9 L747.3,250.5 L748.4,270.5 L749.5,188.5 L750.7,254.5 L751.8,283.1 L753.0,240.5 L754.1,206.3 L755.3,189.6 L756.4,228.2 L757.6,260.8 L758.7,265.3 L759.8,250.3 L761.0,230.8 L762.1,251.2 L763.3,290.3 L764.4,298.9 L765.6,299.7 L766.7,270.6 L767.9,282.6 L769.0,235.3 L770.2,226.9 L771.3,311.2 L772.4,224.1 L773.6,286.8 L774.7,206.7 L775.9,247.0 L777.0,262.0 L778.2,235.5 L779.3,168.0 L780.5,276.9 L781.6,258.1 L782.7,204.8 L783.9,294.2 L785.0,248.5 L786.2,290.3 L787.3,265.6 L788.5,272.6 L789.6,219.3 L790.8,248.4 L791.9,265.8 L793.1,245.4 L794.2,244.2 L795.3,265.9 L796.5,289.7 L797.6,250.6 L798.8,272.9 L799.9,264.4 L801.1,284.6 L802.2,269.7 L803.4,329.4 L804.5,301.4 L805.6,346.1 L806.8,233.0 L807.9,235.5 L809.1,255.0 L810.2,275.8 L811.4,287.3 L812.5,287.2 L813.7,261.3 L814.8,269.0 L816.0,284.5 L817.1,262.6 L818.2,187.1 L819.4,152.0 L820.5,233.4 L821.7,262.0 L822.8,131.5 L824.0,191.4 L825.1,232.8 L826.3,225.9 L827.4,150.0 L828.5,257.2 L829.7,226.6 L830.8,237.4 L832.0,216.1 L833.1,232.9" fill="none" stroke="#f4f63c" stroke-width="2.6" stroke-linejoin="round"/>
<path d="M38.7,385.6h0M40.7,389.7h0M41.2,382.3h0M42.9,370.1h0M42.9,390.3h0M45.2,389.1h0M47.1,411.1h0M47.6,407.1h0M46.5,437.3h0M47.9,443.7h0M48.6,442.1h0M49.7,422.0h0M51.8,423.2h0M53.4,431.0h0M54.2,382.3h0M52.8,365.2h0M54.5,352.0h0M57.0,350.9h0M58.0,351.8h0M58.9,315.2h0M60.0,302.2h0M60.7,290.8h0M60.2,288.4h0M60.5,300.0h0M62.8,295.7h0M64.8,282.9h0M65.7,275.2h0M64.4,288.3h0M66.9,265.5h0M69.0,252.8h0M67.1,247.0h0M70.5,229.4h0M71.2,226.2h0M71.5,221.9h0M72.0,227.9h0M74.7,221.8h0M73.7,209.1h0M76.0,215.3h0M76.2,210.7h0M76.1,248.1h0M78.9,250.2h0M79.3,254.5h0M79.0,258.9h0M79.7,274.1h0M83.0,279.7h0M83.6,294.1h0M83.5,295.8h0M86.0,292.2h0M84.5,271.5h0M86.4,249.1h0M88.8,261.0h0M87.3,252.7h0M87.9,253.8h0M91.7,242.8h0M89.9,241.2h0M91.3,257.7h0M94.3,230.0h0M94.8,248.8h0M96.5,239.5h0M96.5,241.7h0M97.7,244.5h0M96.6,232.9h0M99.4,235.7h0M100.3,232.5h0M101.7,245.8h0M101.1,232.3h0M103.7,242.4h0M104.6,231.5h0M105.8,256.6h0M106.7,240.3h0M105.8,254.0h0M108.6,248.1h0M109.5,245.4h0M110.3,275.9h0M109.1,252.8h0M112.0,248.8h0M112.7,251.7h0M113.9,228.3h0M115.0,203.4h0M116.2,192.1h0M116.3,164.7h0M117.6,165.0h0M118.0,150.6h0M118.5,160.6h0M118.8,142.6h0M119.3,158.6h0M121.7,149.5h0M122.4,162.1h0M125.0,135.3h0M123.6,151.1h0M126.6,154.6h0M125.1,148.1h0M128.8,157.2h0M129.7,152.6h0M128.3,163.2h0M128.9,157.0h0M132.4,168.5h0M132.8,158.3h0M132.0,153.0h0M133.4,147.8h0M134.5,147.1h0M135.0,155.0h0M135.4,157.9h0M139.1,152.9h0M140.0,146.8h0M141.0,155.4h0M140.2,150.2h0M140.6,156.0h0M142.8,155.6h0M143.3,144.6h0M144.0,159.6h0M146.7,143.3h0M147.6,144.1h0M146.7,154.7h0M149.8,155.6h0M148.6,149.8h0M149.6,157.8h0M150.7,157.3h0M152.2,160.0h0M152.2,171.5h0M154.8,172.8h0M153.7,175.9h0M155.0,176.5h0M157.1,163.5h0M157.5,189.5h0M158.3,192.0h0M158.2,179.4h0M159.9,194.1h0M160.6,185.0h0M162.6,195.7h0M164.1,207.0h0M165.1,219.7h0M166.5,229.5h0M166.4,239.5h0M166.5,248.6h0M169.2,255.8h0M168.3,261.7h0M170.2,239.8h0M171.8,255.8h0M172.1,248.5h0M171.9,244.3h0M174.2,229.4h0M176.2,247.5h0M175.9,239.4h0M176.3,222.7h0M179.2,238.0h0M179.7,217.8h0M181.0,224.2h0M180.2,233.2h0M181.6,230.2h0M183.3,245.9h0M184.6,210.4h0M183.7,227.5h0M186.6,237.0h0M186.1,236.6h0M187.7,232.5h0M188.2,209.3h0M188.1,226.3h0M189.8,229.2h0M191.2,220.9h0M192.5,201.6h0M193.1,192.7h0M193.1,204.3h0M195.1,200.9h0M195.0,217.2h0M198.2,200.2h0M196.4,192.8h0M198.3,199.2h0M198.8,191.9h0M200.1,190.0h0M202.5,182.2h0M203.2,192.2h0M204.0,196.6h0M202.9,209.5h0M206.7,188.9h0M207.4,204.8h0M207.1,204.3h0M208.3,207.1h0M210.1,214.3h0M209.5,201.1h0M209.8,199.6h0M213.0,230.7h0M214.1,230.3h0M213.8,218.7h0M216.3,195.5h0M215.4,198.8h0M218.0,183.7h0M217.3,177.0h0M219.7,166.2h0M219.9,168.6h0M221.4,174.7h0M222.4,186.7h0M223.0,172.4h0M223.1,156.7h0M224.3,169.8h0M225.6,170.7h0M224.8,156.5h0M227.7,148.1h0M228.4,175.4h0M229.2,169.1h0M231.5,148.3h0M229.9,162.2h0M230.9,163.4h0M233.8,148.5h0M233.3,163.7h0M234.0,168.3h0M235.2,156.7h0M237.8,168.1h0M238.0,164.3h0M239.6,175.0h0M238.9,158.5h0M241.8,165.7h0M240.6,175.4h0M243.2,152.7h0M242.4,168.7h0M243.1,177.6h0M243.9,195.9h0M245.4,180.8h0M245.7,197.3h0M248.7,195.3h0M247.9,210.2h0M248.9,175.4h0M252.3,183.2h0M251.0,191.0h0M252.1,208.3h0M253.0,192.9h0M253.6,224.2h0M256.5,208.7h0M256.0,200.3h0M258.6,211.7h0M258.7,200.9h0M258.1,203.8h0M261.1,209.9h0M262.2,218.2h0M261.6,201.7h0M262.8,189.9h0M263.4,179.8h0M264.2,195.0h0M266.7,167.4h0M266.1,175.0h0M267.4,172.7h0M269.2,185.9h0M270.5,176.3h0M271.7,162.1h0M272.1,163.4h0M273.6,158.9h0M272.5,140.9h0M275.6,159.0h0M275.4,161.4h0M277.5,131.8h0M278.1,148.3h0M277.3,145.2h0M280.3,151.1h0M280.8,139.5h0M280.9,153.3h0M281.2,160.4h0M282.4,147.5h0M283.7,164.7h0M285.3,181.6h0M286.8,173.0h0M286.9,172.4h0M287.3,179.6h0M288.2,187.1h0M288.7,172.3h0M289.8,184.5h0M292.5,186.4h0M292.9,158.0h0M292.7,189.5h0M295.0,192.2h0M294.8,187.3h0M297.3,197.4h0M297.9,204.2h0M299.3,197.3h0M298.4,193.2h0M300.5,215.2h0M299.9,203.5h0M302.8,200.3h0M303.1,212.9h0M302.8,226.9h0M306.5,220.3h0M305.1,210.3h0M308.0,204.7h0M308.4,207.5h0M308.7,210.8h0M308.8,189.1h0M310.3,216.5h0M311.6,217.6h0M314.1,202.3h0M312.3,201.3h0M314.8,209.4h0M314.9,217.3h0M315.5,214.5h0M317.9,217.1h0M318.4,208.6h0M318.3,215.0h0M321.3,208.5h0M320.5,215.0h0M322.4,203.1h0M321.8,202.0h0M325.1,205.2h0M323.8,182.2h0M326.9,190.9h0M327.1,213.2h0M326.5,201.8h0M329.1,190.7h0M329.5,202.9h0M330.9,177.7h0M332.4,186.2h0M333.6,177.0h0M334.9,200.6h0M333.3,193.7h0M336.7,186.6h0M336.2,196.5h0M335.9,188.8h0M338.5,185.8h0M338.2,183.3h0M341.1,188.2h0M340.1,192.2h0M340.7,180.4h0M342.7,179.8h0M343.7,206.2h0M344.4,189.9h0M344.5,185.1h0M347.1,200.0h0M348.0,193.3h0M350.2,194.0h0M349.0,203.2h0M350.9,193.0h0M350.2,185.9h0M353.4,175.7h0M352.8,187.2h0M355.0,178.9h0M355.4,179.6h0M356.1,203.1h0M358.8,201.0h0M357.5,199.5h0M360.3,195.7h0M359.6,199.0h0M360.5,198.4h0M361.6,189.1h0M362.0,194.1h0M364.8,195.5h0M364.9,194.0h0M364.4,203.3h0M366.0,210.4h0M368.8,208.4h0M370.1,210.8h0M370.8,205.2h0M370.7,202.1h0M370.7,182.8h0M372.2,185.7h0M373.2,201.1h0M374.4,193.2h0M373.9,208.8h0M375.0,189.2h0M376.0,191.9h0M377.0,211.7h0M379.4,205.5h0M379.6,191.0h0M381.8,215.1h0M383.4,215.8h0M384.3,212.6h0M384.4,203.1h0M384.0,223.1h0M384.7,204.7h0M385.8,213.8h0M386.7,226.7h0M387.2,221.5h0M389.6,277.5h0M390.4,265.3h0M392.2,244.0h0M393.5,242.2h0M394.7,254.5h0M393.6,258.0h0M394.4,276.2h0M397.7,261.7h0M398.3,270.6h0M399.1,305.4h0M400.3,296.0h0M399.9,259.3h0M402.2,273.1h0M401.0,247.8h0M401.5,281.7h0M405.1,282.3h0M403.8,275.5h0M407.0,292.2h0M405.3,251.8h0M406.3,258.7h0M407.4,301.9h0M410.7,282.4h0M410.3,283.5h0M412.2,273.3h0M412.4,292.3h0M414.8,291.1h0M413.3,267.2h0M415.3,282.0h0M414.7,271.4h0M417.3,256.7h0M418.8,267.9h0M420.5,285.5h0M418.9,278.2h0M422.2,264.2h0M421.1,249.5h0M423.7,279.3h0M423.3,262.2h0M426.2,246.4h0M425.7,214.0h0M427.0,241.7h0M427.3,254.6h0M428.0,217.7h0M429.8,228.5h0M431.1,220.1h0M430.3,229.3h0M432.4,222.6h0M434.3,232.9h0M435.4,202.1h0M436.2,224.8h0M435.4,225.2h0M437.2,237.2h0M439.5,225.6h0M439.9,223.5h0M439.6,234.2h0M440.4,231.2h0M442.1,220.6h0M442.1,237.4h0M442.5,243.2h0M444.5,214.1h0M444.3,213.9h0M446.0,237.9h0M447.1,207.9h0M447.6,214.5h0M449.9,218.1h0M450.0,241.6h0M452.1,239.2h0M452.2,236.9h0M454.4,256.4h0M455.2,254.1h0M453.8,245.0h0M456.9,254.1h0M458.0,269.1h0M458.2,273.6h0M458.9,244.9h0M460.2,249.2h0M459.8,237.5h0M463.3,258.0h0M462.0,267.0h0M463.5,250.0h0M465.6,274.7h0M464.3,258.1h0M466.5,257.3h0M466.6,261.4h0M467.9,242.1h0M468.9,249.1h0M471.0,229.4h0M472.6,229.2h0M472.1,231.6h0M471.9,240.9h0M474.3,257.2h0M475.6,233.1h0M475.0,254.0h0M475.8,237.2h0M478.4,227.9h0M477.9,221.2h0M480.9,227.4h0M480.3,245.8h0M481.2,251.6h0M484.1,247.5h0M484.1,232.8h0M484.5,228.9h0M484.4,237.9h0M488.0,248.7h0M487.0,228.7h0M487.2,230.9h0M489.5,218.3h0M491.5,237.4h0M489.8,256.6h0M493.5,228.0h0M493.0,233.4h0M495.0,222.8h0M493.8,236.5h0M495.9,214.7h0M497.4,229.6h0M497.5,224.9h0M500.2,236.2h0M499.7,209.9h0M499.6,243.5h0M501.6,228.6h0M502.3,226.8h0M502.5,234.5h0M505.7,219.8h0M506.4,225.1h0M507.2,221.9h0M507.1,232.8h0M507.1,254.0h0M510.2,245.7h0M510.5,233.2h0M511.8,234.0h0M512.0,248.0h0M512.8,231.6h0M514.8,234.4h0M513.9,238.6h0M517.4,240.2h0M516.9,216.3h0M518.3,218.6h0M519.7,213.1h0M518.7,218.6h0M519.6,211.8h0M522.4,219.4h0M522.4,214.1h0M522.9,205.5h0M523.3,223.5h0M526.5,220.3h0M525.6,241.9h0M528.0,219.1h0M528.8,208.0h0M528.0,218.0h0M530.5,219.5h0M531.1,227.8h0M531.9,243.1h0M532.2,231.8h0M533.4,214.8h0M534.8,247.5h0M536.4,222.9h0M536.2,221.7h0M539.0,235.2h0M538.7,221.0h0M538.8,227.0h0M539.2,241.2h0M542.5,223.8h0M542.7,232.9h0M544.8,227.3h0M544.8,224.1h0M545.9,225.2h0M546.9,238.7h0M548.7,228.3h0M548.4,212.0h0M549.9,202.0h0M549.1,230.4h0M551.4,223.6h0M552.8,231.5h0M552.4,248.5h0M554.4,244.2h0M556.3,216.9h0M554.8,218.4h0M556.3,208.0h0M556.7,225.1h0M557.4,237.0h0M561.0,249.3h0M559.7,255.3h0M560.8,229.6h0M561.8,248.5h0M564.5,219.8h0M563.4,216.5h0M565.9,230.1h0M567.6,238.8h0M566.5,244.1h0M568.4,232.9h0M568.4,223.2h0M570.6,220.4h0M570.5,221.0h0M572.6,223.0h0M573.7,244.9h0M573.4,240.7h0M574.9,215.2h0M575.3,222.4h0M577.8,234.0h0M577.9,220.1h0M579.7,207.6h0M579.6,207.3h0M581.5,213.6h0M582.1,221.2h0M581.2,219.2h0M582.5,216.7h0M585.8,236.3h0M584.0,240.8h0M586.6,226.5h0M587.0,229.9h0M589.1,222.0h0M588.6,243.1h0M590.9,221.5h0M591.1,205.5h0M592.0,222.1h0M593.6,232.0h0M594.1,234.0h0M595.7,193.6h0M594.5,257.8h0M597.2,235.3h0M596.7,228.0h0M599.3,232.9h0M600.2,227.7h0M601.1,240.9h0M602.7,193.0h0M601.5,219.8h0M603.7,208.6h0M604.7,230.2h0M604.3,227.7h0M606.1,210.2h0M608.0,228.6h0M609.0,222.2h0M607.9,217.7h0M609.3,223.3h0M612.3,212.6h0M611.6,231.7h0M611.4,217.7h0M612.3,217.0h0M613.4,209.3h0M615.2,222.2h0M617.1,213.4h0M617.2,251.2h0M617.6,219.4h0M620.1,213.5h0M619.1,231.4h0M622.0,234.1h0M622.3,206.7h0M622.0,213.2h0M623.9,221.8h0M625.9,206.1h0M627.1,242.1h0M628.4,225.2h0M628.5,195.9h0M627.6,229.6h0M630.6,243.3h0M630.9,214.8h0M633.1,195.5h0M633.8,208.6h0M634.6,209.9h0M634.1,227.2h0M634.2,222.7h0M635.5,208.3h0M636.4,234.7h0M637.3,218.0h0M638.3,200.9h0M639.3,242.1h0M639.9,218.2h0M642.6,234.2h0M643.6,224.7h0M645.1,210.4h0M643.7,203.3h0M647.2,209.6h0M647.7,215.8h0M647.5,232.1h0M649.4,233.4h0M651.4,195.8h0M650.6,230.2h0M653.1,247.4h0M653.9,198.1h0M654.7,219.1h0M654.8,211.4h0M656.0,233.9h0M657.8,215.2h0M656.6,219.1h0M657.7,219.0h0M659.2,219.6h0M661.1,200.0h0M661.9,223.1h0M662.7,253.6h0M663.8,205.3h0M662.7,221.8h0M665.1,224.9h0M666.9,210.2h0M666.7,226.3h0M666.7,226.9h0M667.5,240.4h0M670.8,245.1h0M669.9,221.5h0M672.0,235.7h0M671.5,226.2h0M673.9,232.3h0M675.7,220.4h0M676.2,216.6h0M676.1,209.8h0M678.3,225.8h0M677.6,234.5h0M678.9,232.0h0M679.0,223.9h0M679.8,211.0h0M682.8,228.9h0M682.2,229.3h0M682.8,221.5h0M685.2,225.0h0M686.2,240.4h0M685.8,213.0h0M686.9,217.5h0M688.1,224.3h0M688.5,224.1h0M691.2,227.0h0M691.6,244.6h0M692.7,220.1h0M693.7,222.8h0M695.0,218.8h0M696.2,188.8h0M695.5,239.6h0M696.1,202.3h0M697.3,221.7h0M700.6,201.1h0M701.6,216.6h0M702.5,220.9h0M701.3,217.7h0M703.0,268.3h0M703.8,216.0h0M704.6,216.4h0M706.3,218.7h0M707.5,223.8h0M709.2,225.7h0M709.0,231.3h0M708.8,222.6h0M711.9,223.3h0M711.0,193.9h0M713.8,221.8h0M712.9,220.7h0M714.6,209.6h0M715.5,201.7h0M716.7,239.0h0M716.4,199.7h0M717.3,209.6h0M718.8,229.6h0M720.9,215.4h0M722.0,223.6h0M722.7,223.2h0M723.9,250.4h0M723.1,234.3h0M724.1,213.6h0M726.7,235.5h0M726.1,229.6h0M727.6,230.8h0M729.0,205.0h0M728.7,207.1h0M729.6,223.0h0M732.6,215.6h0M733.9,205.5h0M732.8,209.9h0M735.6,205.8h0M735.5,223.3h0M734.9,226.2h0M736.5,220.2h0M736.8,183.4h0M738.1,207.4h0M739.9,219.9h0M739.9,226.0h0M742.6,231.7h0M742.5,201.0h0M744.1,250.0h0M744.6,238.6h0M746.8,245.4h0M747.4,217.6h0M746.5,212.8h0M747.8,219.3h0M748.9,234.0h0M751.3,229.9h0M750.9,213.1h0M753.7,205.3h0M752.7,240.7h0M755.4,245.2h0M754.8,216.6h0M756.6,218.3h0M756.2,227.6h0M757.3,212.6h0M758.7,222.2h0M758.9,218.8h0M760.3,233.0h0M761.9,234.6h0M762.8,210.5h0M762.7,215.8h0M763.5,215.2h0M765.7,219.7h0M767.5,228.3h0M767.4,225.7h0M768.0,222.7h0M768.3,228.5h0M769.6,218.8h0M771.0,209.9h0M771.3,259.5h0M774.6,195.9h0M773.7,219.2h0M774.2,202.9h0M777.2,222.6h0M777.1,234.5h0M777.6,245.4h0M778.2,212.2h0M780.3,200.5h0M782.2,206.3h0M782.9,247.5h0M782.5,234.2h0M785.1,230.6h0M785.6,203.5h0M787.2,212.8h0M786.0,200.0h0M786.6,241.9h0M788.1,245.7h0M788.5,202.0h0M791.0,204.4h0M791.3,212.2h0M793.5,201.6h0M792.2,233.0h0M793.5,228.4h0M794.3,233.6h0M797.6,238.5h0M797.1,203.5h0M799.2,213.0h0M800.0,235.5h0M801.1,225.9h0M800.5,236.8h0M803.1,218.0h0M803.5,216.8h0M804.8,233.5h0M805.5,232.0h0M807.2,251.8h0M807.9,238.9h0M808.3,235.9h0M809.1,219.9h0M809.7,208.2h0M810.6,251.5h0M812.7,215.1h0M813.5,226.8h0M814.6,220.0h0M815.2,239.4h0M814.5,218.3h0M814.9,223.2h0M817.8,242.5h0M817.1,240.7h0M819.3,219.4h0M820.6,203.3h0M819.6,198.4h0M820.6,226.5h0M822.7,217.8h0M824.5,224.3h0M824.4,232.1h0M824.8,232.1h0M826.6,235.5h0M829.0,226.3h0M827.6,219.3h0M828.2,231.0h0M830.0,221.7h0M831.0,241.1h0M830.8,211.3h0M833.6,212.0h0" fill="none" stroke="#e6813c" stroke-width="4.2" stroke-linecap="round"/>
<path d="M39.6,392.7h0M40.7,389.6h0M41.8,390.9h0M42.6,394.0h0M43.5,402.6h0M44.4,409.6h0M45.7,411.9h0M46.5,416.4h0M47.6,425.3h0M48.9,424.2h0M49.4,433.2h0M50.0,430.5h0M51.2,418.1h0M52.5,408.0h0M52.9,407.6h0M53.9,382.2h0M54.7,364.7h0M55.8,349.1h0M56.9,342.2h0M57.7,330.5h0M59.2,321.3h0M59.6,301.4h0M60.8,302.8h0M61.6,296.6h0M62.8,292.0h0M63.8,285.6h0M64.7,275.7h0M65.5,268.7h0M66.7,268.0h0M67.7,261.0h0M68.5,237.9h0M69.7,233.8h0M70.3,221.3h0M71.1,216.0h0M72.6,212.0h0M73.3,212.6h0M74.4,218.9h0M74.9,218.2h0M75.6,228.2h0M76.6,248.6h0M78.4,255.0h0M79.4,259.4h0M80.1,262.7h0M81.0,265.2h0M81.5,284.5h0M82.9,278.9h0M83.8,289.9h0M84.5,283.4h0M85.2,272.9h0M86.9,251.3h0M87.0,251.0h0M88.9,248.7h0M89.5,251.1h0M89.9,247.4h0M90.9,247.4h0M92.5,245.7h0M92.8,245.8h0M94.4,249.1h0M95.1,246.4h0M96.3,243.8h0M97.3,245.5h0M97.6,244.9h0M98.8,237.5h0M99.5,242.8h0M100.9,239.7h0M102.2,245.7h0M102.3,252.2h0M103.5,238.8h0M104.7,248.2h0M105.4,250.2h0M106.8,255.0h0M107.4,251.4h0M107.9,264.0h0M109.4,259.9h0M110.5,261.5h0M111.3,256.5h0M112.6,242.2h0M113.1,224.3h0M114.4,202.3h0M115.3,183.0h0M116.4,163.0h0M116.6,162.4h0M117.8,151.8h0M118.5,166.4h0M119.4,150.0h0M120.8,150.8h0M121.2,157.9h0M122.7,150.6h0M124.0,150.7h0M124.3,153.4h0M125.1,156.8h0M126.4,161.0h0M127.5,155.3h0M128.1,154.2h0M129.5,157.3h0M130.7,160.9h0M131.0,153.6h0M132.5,161.1h0M133.2,155.7h0M134.3,157.5h0M135.1,152.1h0M135.7,153.1h0M136.6,153.7h0M138.1,152.8h0M138.5,159.7h0M139.4,154.5h0M141.0,155.2h0M142.0,151.8h0M142.3,157.6h0M143.2,151.9h0M144.2,146.6h0M145.1,141.8h0M146.0,146.9h0M147.5,149.1h0M148.1,151.4h0M149.7,154.0h0M150.6,159.7h0M151.6,163.3h0M151.7,168.0h0M152.7,158.3h0M154.1,171.8h0M155.2,174.6h0M156.0,174.2h0M157.0,179.3h0M157.5,192.0h0M159.0,196.2h0M160.0,194.1h0M161.1,181.5h0M161.3,197.7h0M162.4,197.3h0M163.4,206.2h0M164.8,231.2h0M165.3,234.7h0M166.8,234.0h0M167.3,260.9h0M167.9,255.9h0M168.7,261.0h0M169.7,243.4h0M171.3,253.5h0M171.6,246.2h0M172.8,242.5h0M174.0,237.4h0M175.1,237.6h0M175.7,222.1h0M176.7,239.5h0M177.5,226.9h0M179.0,237.8h0M179.2,214.8h0M180.3,220.9h0M181.6,232.4h0M182.0,235.7h0M183.9,219.2h0M184.8,233.5h0M185.5,224.7h0M186.4,225.5h0M187.7,224.3h0M187.8,213.8h0M188.9,218.5h0M189.7,227.4h0M190.8,218.1h0M192.3,206.2h0M192.7,203.8h0M194.0,199.4h0M194.6,197.8h0M195.3,195.6h0M196.8,196.8h0M197.5,200.7h0M199.0,197.5h0M199.5,198.2h0M201.0,197.2h0M201.4,193.1h0M202.8,186.6h0M203.7,185.8h0M204.8,203.7h0M205.6,191.1h0M206.3,188.9h0M207.3,193.6h0M208.4,197.2h0M209.0,195.1h0M210.0,197.1h0M210.6,200.9h0M212.4,209.6h0M213.4,222.9h0M213.4,223.0h0M215.2,210.8h0M215.8,193.7h0M216.6,186.4h0M217.8,176.7h0M218.5,166.1h0M220.0,163.3h0M221.0,161.9h0M221.1,155.7h0M222.4,168.8h0M223.7,171.0h0M224.0,157.6h0M224.9,162.1h0M226.1,166.4h0M227.1,159.4h0M227.6,154.6h0M229.2,161.2h0M229.8,155.9h0M231.0,158.6h0M232.2,163.9h0M232.9,166.2h0M233.4,173.2h0M235.0,162.7h0M235.3,172.0h0M236.6,165.9h0M237.7,174.4h0M238.3,182.2h0M239.3,179.4h0M240.6,176.4h0M241.1,159.7h0M242.2,167.1h0M243.0,163.9h0M244.7,164.5h0M245.2,186.2h0M245.8,193.2h0M246.8,190.5h0M248.2,190.0h0M248.6,190.9h0M249.9,198.1h0M250.8,193.7h0M251.6,202.5h0M252.8,203.8h0M254.1,195.1h0M254.8,207.9h0M255.7,208.2h0M256.5,209.1h0M257.4,212.8h0M258.3,205.3h0M259.3,200.7h0M260.2,206.5h0M261.1,196.9h0M262.7,209.4h0M262.8,201.8h0M264.1,190.2h0M265.5,180.2h0M265.7,185.3h0M266.6,178.1h0M267.8,171.1h0M269.1,174.0h0M270.1,166.6h0M270.7,173.9h0M271.6,169.8h0M272.3,155.5h0M273.4,159.1h0M274.8,142.6h0M275.4,160.7h0M277.0,145.9h0M277.6,147.1h0M278.4,135.9h0M279.7,156.4h0M280.1,134.9h0M281.3,151.1h0M282.2,154.8h0M283.4,153.7h0M284.2,145.8h0M284.9,189.2h0M285.9,189.2h0M286.7,182.3h0M288.2,186.8h0M288.8,185.6h0M289.5,182.8h0M290.6,179.0h0M291.3,202.8h0M292.3,184.8h0M293.3,184.3h0M294.6,204.8h0M295.7,202.1h0M296.2,197.9h0M297.8,198.3h0M298.7,204.6h0M299.7,203.6h0M300.6,205.5h0M301.1,213.7h0M302.3,208.6h0M303.6,224.5h0M303.8,213.1h0M305.2,215.2h0M305.6,214.7h0M307.2,216.4h0M308.2,201.1h0M308.9,203.5h0M310.0,216.0h0M310.5,206.7h0M311.4,218.7h0M313.1,224.4h0M314.1,208.4h0M314.7,212.8h0M316.0,209.1h0M316.3,218.6h0M317.6,215.0h0M318.2,210.3h0M319.4,211.2h0M320.6,209.0h0M321.0,214.9h0M322.1,203.5h0M322.7,197.8h0M324.0,206.8h0M325.1,197.6h0M326.4,196.3h0M326.8,199.6h0M328.1,196.5h0M328.5,190.6h0M329.5,189.2h0M331.1,185.3h0M332.1,193.3h0M332.4,192.3h0M333.2,187.1h0M334.7,197.5h0M335.5,192.8h0M336.6,192.2h0M337.7,190.7h0M337.9,193.4h0M339.0,191.2h0M340.6,186.7h0M341.6,196.9h0M342.1,198.5h0M342.7,196.0h0M344.0,197.9h0M345.3,192.3h0M345.6,198.2h0M346.5,190.9h0M347.7,193.8h0M348.6,198.8h0M349.2,198.2h0M350.4,191.2h0M351.6,207.3h0M352.6,195.9h0M353.6,192.3h0M354.7,202.1h0M355.2,196.0h0M356.5,192.5h0M356.9,194.0h0M358.2,194.0h0M359.0,196.7h0M360.1,191.5h0M360.8,200.1h0M362.3,187.8h0M363.4,195.9h0M364.0,201.6h0M364.8,198.9h0M366.2,197.6h0M366.5,197.6h0M367.6,200.4h0M368.8,201.1h0M369.8,205.8h0M370.4,201.1h0M371.9,193.5h0M372.3,199.8h0M373.6,199.3h0M373.9,197.7h0M375.4,200.4h0M376.7,189.4h0M377.4,200.5h0M377.9,206.0h0M379.5,197.3h0M380.2,199.2h0M381.3,202.5h0M382.3,200.6h0M382.9,202.7h0M383.5,208.8h0M385.1,196.3h0M386.1,206.0h0M386.3,207.1h0M388.1,219.5h0M388.9,232.0h0M389.9,233.4h0M390.7,230.1h0M391.3,254.5h0M392.0,250.7h0M393.0,252.5h0M394.8,262.9h0M395.1,265.3h0M396.5,268.7h0M396.9,270.6h0M398.5,276.3h0M398.9,274.0h0M399.7,275.9h0M401.1,288.2h0M401.8,287.2h0M403.3,292.9h0M403.5,285.7h0M404.5,284.3h0M405.9,293.7h0M406.9,308.5h0M407.4,290.1h0M408.6,286.5h0M409.1,294.3h0M410.1,278.3h0M411.1,281.3h0M412.4,291.1h0M413.8,278.3h0M414.7,281.3h0M415.0,284.3h0M416.1,268.9h0M417.3,268.1h0M418.3,295.6h0M418.9,265.9h0M419.9,259.5h0M421.4,279.9h0M421.7,253.6h0M422.5,274.4h0M424.2,271.7h0M424.9,243.3h0M425.2,248.4h0M426.7,251.3h0M427.8,226.5h0M428.6,223.4h0M429.6,226.3h0M430.2,240.2h0M431.4,222.7h0M432.8,216.5h0M433.6,225.9h0M434.2,214.0h0M435.6,230.5h0M436.5,224.6h0M436.7,211.3h0M438.0,226.7h0M439.2,212.6h0M440.2,227.0h0M440.9,221.5h0M441.7,225.9h0M442.4,226.3h0M443.6,222.4h0M444.8,224.9h0M445.9,218.4h0M446.5,217.9h0M447.5,219.6h0M448.4,215.3h0M449.9,229.3h0M450.2,244.8h0M451.4,225.4h0M451.8,239.5h0M453.6,244.4h0M454.1,246.7h0M455.3,258.2h0M456.3,251.5h0M456.7,266.4h0M457.6,274.2h0M458.5,259.0h0M459.5,259.6h0M461.3,266.4h0M461.6,258.9h0M462.5,257.9h0M464.1,248.9h0M464.2,249.6h0M466.0,251.6h0M466.6,244.3h0M467.6,239.4h0M468.9,242.9h0M469.4,235.4h0M470.1,241.7h0M471.6,231.8h0M472.2,237.5h0M473.3,247.7h0M474.2,241.2h0M475.4,224.7h0M475.8,237.0h0M477.4,234.3h0M478.2,239.4h0M478.7,240.8h0M479.4,231.4h0M480.6,232.9h0M481.8,240.1h0M483.0,238.7h0M483.5,238.2h0M484.3,229.1h0M485.8,222.9h0M486.8,242.5h0M487.9,226.4h0M488.7,216.6h0M489.3,237.6h0M489.9,235.1h0M491.6,233.9h0M492.3,237.6h0M493.3,237.3h0M493.8,231.4h0M494.8,239.3h0M496.1,233.7h0M496.5,228.6h0M497.5,226.1h0M499.0,233.6h0M499.6,238.9h0M500.4,242.9h0M501.7,228.2h0M502.3,223.7h0M503.3,227.7h0M504.3,236.9h0M505.0,238.6h0M506.5,229.5h0M507.1,231.2h0M508.4,227.6h0M509.4,232.2h0M510.5,235.9h0M511.7,240.3h0M512.5,224.4h0M513.5,247.2h0M514.0,235.5h0M515.2,234.8h0M515.6,232.3h0M517.4,233.1h0M518.1,240.6h0M518.5,221.7h0M519.3,229.7h0M521.2,225.7h0M522.0,244.6h0M522.9,233.8h0M523.9,233.8h0M525.0,214.5h0M525.9,232.0h0M526.1,233.1h0M527.3,239.4h0M528.2,233.2h0M529.7,233.8h0M530.4,233.7h0M531.5,230.6h0M531.6,240.1h0M533.2,224.3h0M533.9,235.7h0M534.5,228.8h0M536.1,231.4h0M536.4,232.1h0M538.3,226.9h0M538.9,235.6h0M540.2,209.1h0M541.0,234.5h0M541.3,237.2h0M542.3,227.9h0M543.9,223.0h0M544.8,228.4h0M545.3,236.2h0M546.5,223.6h0M547.7,222.9h0M547.8,235.0h0M549.1,229.6h0M550.4,235.6h0M551.6,232.5h0M552.1,236.2h0M553.1,227.0h0M554.0,212.0h0M555.2,226.1h0M556.1,227.1h0M556.9,235.0h0M557.4,214.5h0M558.9,232.0h0M559.4,215.1h0M560.3,222.7h0M561.4,225.7h0M562.4,214.9h0M563.2,235.4h0M564.5,229.8h0M565.6,219.5h0M566.6,227.4h0M567.3,226.0h0M568.5,241.5h0M569.0,233.6h0M569.7,216.7h0M571.0,229.4h0M572.1,238.2h0M573.2,214.4h0M573.7,217.7h0M574.5,234.1h0M576.0,231.0h0M576.3,220.4h0M577.9,221.1h0M578.4,234.8h0M579.3,221.7h0M580.9,237.2h0M581.6,230.2h0M582.7,222.8h0M583.5,229.9h0M584.1,236.4h0M585.6,219.8h0M586.6,226.8h0M586.8,226.6h0M588.2,227.6h0M588.7,228.5h0M589.9,222.0h0M590.7,233.9h0M591.5,226.9h0M592.8,236.2h0M593.9,219.2h0M594.5,243.0h0M596.2,215.9h0M596.7,231.7h0M597.9,219.6h0M598.5,225.1h0M599.6,221.4h0M600.2,225.0h0M601.9,225.6h0M602.6,225.3h0M602.9,233.6h0M604.1,222.9h0M605.7,224.8h0M606.1,236.4h0M606.8,228.8h0M608.1,241.9h0M609.0,227.0h0M610.1,220.1h0M610.5,235.1h0M612.4,213.8h0M613.2,227.2h0M613.5,218.6h0M615.1,226.7h0M616.1,221.9h0M616.8,231.2h0M617.3,225.3h0M618.2,221.2h0M619.5,215.2h0M620.4,235.4h0M621.4,215.2h0M622.1,217.4h0M622.9,232.7h0M624.0,229.5h0M625.5,228.8h0M625.7,241.1h0M626.6,229.2h0M627.8,215.5h0M629.4,223.3h0M630.2,239.8h0M630.6,225.1h0M631.5,227.1h0M632.3,229.1h0M633.8,215.9h0M634.3,232.2h0M635.5,235.7h0M636.9,226.2h0M637.7,225.1h0M639.0,216.1h0M639.7,231.5h0M640.3,218.6h0M641.5,235.6h0M641.9,231.4h0M643.3,215.1h0M644.3,233.1h0M645.6,228.7h0M646.3,227.1h0M646.7,229.9h0M647.8,220.0h0M648.5,202.1h0M650.3,223.1h0M651.1,221.1h0M651.3,223.8h0M652.6,223.6h0M654.0,218.3h0M654.5,216.7h0M656.1,226.7h0M656.6,228.9h0M657.7,224.9h0M658.2,222.7h0M659.6,226.4h0M660.5,217.0h0M661.0,221.5h0M662.0,220.3h0M663.3,215.7h0M664.0,224.0h0M665.0,223.7h0M666.5,219.0h0M666.7,226.6h0M668.1,209.7h0M669.3,213.3h0M670.2,223.4h0M671.0,221.0h0M672.2,227.3h0M672.9,222.9h0M674.1,212.8h0M674.3,222.2h0M675.2,228.1h0M676.1,222.3h0M677.5,225.3h0M678.2,211.3h0M679.0,222.3h0M680.4,205.5h0M681.4,223.7h0M682.1,227.1h0M682.7,227.2h0M683.8,217.1h0M684.9,202.9h0M685.6,222.7h0M687.3,235.3h0M688.3,214.9h0M689.2,221.2h0M690.2,208.3h0M690.7,218.2h0M691.6,236.5h0M692.3,231.5h0M693.1,207.8h0M694.3,209.7h0M695.1,226.3h0M696.8,208.9h0M697.1,206.6h0M698.1,228.1h0M699.0,220.0h0M700.2,219.5h0M700.9,210.9h0M702.1,230.9h0M703.4,229.3h0M703.8,226.9h0M704.8,219.6h0M705.6,220.5h0M706.7,211.0h0M707.5,220.8h0M708.4,226.8h0M710.1,226.0h0M710.8,213.2h0M711.8,233.3h0M713.0,218.8h0M713.2,227.4h0M715.0,226.6h0M715.8,225.1h0M716.0,221.7h0M717.7,237.3h0M717.9,229.4h0M719.4,221.2h0M720.2,220.2h0M721.3,210.2h0M721.6,210.1h0M723.2,230.0h0M723.7,204.1h0M724.9,238.1h0M726.1,214.7h0M726.5,222.9h0M727.3,227.3h0M728.3,206.0h0M729.6,219.9h0M730.6,233.9h0M731.5,235.3h0M732.7,214.4h0M733.2,223.2h0M734.8,210.4h0M735.5,223.1h0M736.6,222.3h0M737.0,222.6h0M738.0,217.3h0M738.8,241.9h0M740.0,216.2h0M741.1,222.9h0M741.7,232.3h0M742.8,226.5h0M743.9,230.1h0M744.5,230.2h0M746.1,225.2h0M746.4,219.1h0M748.1,225.0h0M748.9,219.7h0M749.7,232.4h0M750.4,215.2h0M751.1,223.0h0M752.6,220.0h0M753.2,219.7h0M754.1,226.1h0M755.6,237.6h0M756.1,223.7h0M756.8,233.3h0M758.6,230.6h0M758.8,214.9h0M760.3,211.2h0M760.6,217.7h0M762.2,225.9h0M763.2,225.7h0M764.3,234.8h0M764.8,220.7h0M766.3,228.4h0M766.9,224.1h0M768.0,222.0h0M768.2,227.6h0M769.9,227.7h0M770.2,210.7h0M771.2,226.1h0M772.1,226.4h0M773.2,224.5h0M774.3,235.9h0M775.3,222.9h0M775.9,229.3h0M777.0,225.9h0M778.6,235.1h0M778.8,225.7h0M780.0,232.8h0M780.5,226.9h0M782.4,218.9h0M782.7,220.9h0M783.7,230.4h0M784.7,215.2h0M785.5,238.5h0M786.9,226.4h0M787.8,214.9h0M788.6,218.4h0M789.9,235.4h0M790.9,225.6h0M791.0,232.8h0M792.2,228.8h0M793.1,222.8h0M794.1,239.9h0M794.8,237.9h0M796.2,214.4h0M797.0,214.7h0M798.5,225.3h0M799.1,234.3h0M800.0,217.8h0M801.1,228.0h0M802.4,224.6h0M802.4,218.9h0M803.7,234.1h0M805.0,222.5h0M806.0,229.2h0M806.6,216.9h0M807.3,223.7h0M808.2,217.0h0M809.1,260.5h0M810.7,233.1h0M811.7,231.1h0M812.1,235.3h0M813.7,235.1h0M814.3,233.0h0M815.1,221.1h0M816.1,217.1h0M816.6,219.2h0M817.8,225.7h0M819.1,230.4h0M820.2,225.9h0M820.7,235.6h0M822.3,222.8h0M823.1,224.1h0M823.9,233.2h0M824.4,227.5h0M825.8,224.4h0M826.2,228.4h0M827.2,217.5h0M828.5,234.5h0M829.5,229.0h0M830.6,233.9h0M831.3,218.7h0M832.0,232.9h0M833.6,225.0h0" fill="none" stroke="#1c10a8" stroke-width="4.5" stroke-linecap="round"/>
</g>
<path d="M834.5,101V530.5" stroke="#36443a" stroke-opacity="0.55" stroke-width="1.9"/>
<rect x="38" y="101" width="1236" height="429.5" fill="none" stroke="#a8aca8" stroke-opacity="0.6" stroke-width="2"/>
<path d="M107.7,532.5v3" stroke="#111" stroke-width="1.5"/>
<text x="92.5" y="549.8" font-size="12" font-weight="bold" fill="#f4f4f4" textLength="30.4" lengthAdjust="spacingAndGlyphs"  stroke="#f4f4f4" stroke-width="0.38" stroke-linejoin="round">02:00</text>
<path d="M244.9,532.5v3" stroke="#111" stroke-width="1.5"/>
<text x="229.7" y="549.8" font-size="12" font-weight="bold" fill="#f4f4f4" textLength="30.4" lengthAdjust="spacingAndGlyphs"  stroke="#f4f4f4" stroke-width="0.38" stroke-linejoin="round">04:00</text>
<path d="M382.2,532.5v3" stroke="#111" stroke-width="1.5"/>
<text x="367.0" y="549.8" font-size="12" font-weight="bold" fill="#f4f4f4" textLength="30.4" lengthAdjust="spacingAndGlyphs"  stroke="#f4f4f4" stroke-width="0.38" stroke-linejoin="round">06:00</text>
<path d="M519.4,532.5v3" stroke="#111" stroke-width="1.5"/>
<text x="504.2" y="549.8" font-size="12" font-weight="bold" fill="#f4f4f4" textLength="30.4" lengthAdjust="spacingAndGlyphs"  stroke="#f4f4f4" stroke-width="0.38" stroke-linejoin="round">08:00</text>
<path d="M656.6,532.5v3" stroke="#111" stroke-width="1.5"/>
<text x="641.4" y="549.8" font-size="12" font-weight="bold" fill="#f4f4f4" textLength="30.4" lengthAdjust="spacingAndGlyphs"  stroke="#f4f4f4" stroke-width="0.38" stroke-linejoin="round">10:00</text>
<path d="M793.9,532.5v3" stroke="#111" stroke-width="1.5"/>
<text x="778.6" y="549.8" font-size="12" font-weight="bold" fill="#f4f4f4" textLength="30.4" lengthAdjust="spacingAndGlyphs"  stroke="#f4f4f4" stroke-width="0.38" stroke-linejoin="round">12:00</text>
<path d="M931.1,532.5v3" stroke="#111" stroke-width="1.5"/>
<text x="915.9" y="549.8" font-size="12" font-weight="bold" fill="#f4f4f4" textLength="30.4" lengthAdjust="spacingAndGlyphs"  stroke="#f4f4f4" stroke-width="0.38" stroke-linejoin="round">14:00</text>
<path d="M1068.3,532.5v3" stroke="#111" stroke-width="1.5"/>
<text x="1053.1" y="549.8" font-size="12" font-weight="bold" fill="#f4f4f4" textLength="30.4" lengthAdjust="spacingAndGlyphs"  stroke="#f4f4f4" stroke-width="0.38" stroke-linejoin="round">16:00</text>
<path d="M1205.5,532.5v3" stroke="#111" stroke-width="1.5"/>
<text x="1190.3" y="549.8" font-size="12" font-weight="bold" fill="#f4f4f4" textLength="30.4" lengthAdjust="spacingAndGlyphs"  stroke="#f4f4f4" stroke-width="0.38" stroke-linejoin="round">18:00</text>
<text x="17.4" y="161.3" font-size="12" font-weight="bold" fill="#f4f4f4" textLength="12.8" lengthAdjust="spacingAndGlyphs"  stroke="#f4f4f4" stroke-width="0.38" stroke-linejoin="round">15</text>
<text x="17.4" y="286.1" font-size="12" font-weight="bold" fill="#f4f4f4" textLength="12.8" lengthAdjust="spacingAndGlyphs"  stroke="#f4f4f4" stroke-width="0.38" stroke-linejoin="round">10</text>
<text x="23.8" y="410.9" font-size="12" font-weight="bold" fill="#f4f4f4" textLength="6.4" lengthAdjust="spacingAndGlyphs"  stroke="#f4f4f4" stroke-width="0.38" stroke-linejoin="round">5</text>
<text x="23.8" y="535.2" font-size="12" font-weight="bold" fill="#f4f4f4" textLength="6.4" lengthAdjust="spacingAndGlyphs"  stroke="#f4f4f4" stroke-width="0.38" stroke-linejoin="round">0</text>
<text x="1283.5" y="105.4" font-size="12" font-weight="bold" fill="#f4f4f4" textLength="19.8" lengthAdjust="spacingAndGlyphs"  stroke="#f4f4f4" stroke-width="0.38" stroke-linejoin="round">360</text>
<text x="1283.5" y="212.9" font-size="12" font-weight="bold" fill="#f4f4f4" textLength="19.8" lengthAdjust="spacingAndGlyphs"  stroke="#f4f4f4" stroke-width="0.38" stroke-linejoin="round">270</text>
<text x="1283.5" y="320.4" font-size="12" font-weight="bold" fill="#f4f4f4" textLength="19.8" lengthAdjust="spacingAndGlyphs"  stroke="#f4f4f4" stroke-width="0.38" stroke-linejoin="round">180</text>
<text x="1283.5" y="427.9" font-size="12" font-weight="bold" fill="#f4f4f4" textLength="13.2" lengthAdjust="spacingAndGlyphs"  stroke="#f4f4f4" stroke-width="0.38" stroke-linejoin="round">90</text>
<text x="1283.5" y="534.9" font-size="12" font-weight="bold" fill="#f4f4f4" textLength="6.6" lengthAdjust="spacingAndGlyphs"  stroke="#f4f4f4" stroke-width="0.38" stroke-linejoin="round">0</text>
<rect x="36" y="636" width="1269" height="274" fill="#000" opacity="0.45" filter="url(#fShadow)"/>
<rect x="37" y="637" width="1267" height="273" fill="url(#gGlowT)" filter="url(#fShadow)"/>
<rect x="38" y="638" width="1265" height="270" fill="url(#gTide)"/>
<path d="M109.0,638V908 M249.5,638V908 M390.0,638V908 M530.5,638V908 M671.0,638V908 M811.5,638V908 M952.0,638V908 M1092.5,638V908 M1233.0,638V908 M38,875.0H1303 M38,841.2H1303 M38,807.5H1303 M38,773.8H1303 M38,740.0H1303 M38,706.2H1303 M38,672.5H1303" stroke="#56686b" stroke-opacity="0.5" stroke-width="1.25" fill="none"/>
<g clip-path="url(#cTide)">
<path d="M38,875.3 L38.0,868.8 L100.0,868.6 L200.0,867.8 L300.0,866.8 L380.0,866.0 L443.0,864.8 L520.0,866.0 L600.0,867.0 L640.0,868.0 L665.0,870.3 L700.0,870.5 L760.0,870.0 L809.5,870.3 L809.5,875.3 Z" fill="#3636b4" fill-opacity="0.85" stroke="#2b2b9a" stroke-width="1"/>
<path d="M38.0,846.0 C44.2,845.8 63.0,845.7 75.0,844.9 C87.0,844.1 97.5,842.6 110.0,841.0 C122.5,839.4 133.9,838.0 150.0,835.5 C166.1,833.0 187.9,829.0 206.7,826.0 C225.5,823.0 247.3,819.5 263.0,817.5 C278.6,815.5 287.4,814.8 300.6,814.0 C313.8,813.2 329.5,813.0 342.0,813.0 C354.5,813.0 357.5,812.5 375.7,813.7 C393.9,815.0 425.9,817.6 451.0,820.5 C476.1,823.4 504.1,827.9 526.0,831.0 C547.9,834.1 563.6,836.9 582.4,839.3 C601.2,841.7 624.6,844.4 638.8,845.6 C653.0,846.9 657.5,846.9 667.7,846.8 C677.9,846.7 690.5,846.0 700.0,845.0 C709.5,844.0 715.0,842.0 725.0,841.0 C735.0,840.0 747.5,839.5 760.0,839.0 C772.5,838.5 788.3,838.1 800.0,837.8 C811.7,837.5 821.4,837.3 830.0,837.2 C838.6,837.1 848.2,837.0 851.8,837.0" transform="translate(0,2.4)" fill="none" stroke="#f4dada" stroke-opacity="0.55" stroke-width="2.4"/>
<path d="M38.0,846.0 C44.2,845.8 63.0,845.7 75.0,844.9 C87.0,844.1 97.5,842.6 110.0,841.0 C122.5,839.4 133.9,838.0 150.0,835.5 C166.1,833.0 187.9,829.0 206.7,826.0 C225.5,823.0 247.3,819.5 263.0,817.5 C278.6,815.5 287.4,814.8 300.6,814.0 C313.8,813.2 329.5,813.0 342.0,813.0 C354.5,813.0 357.5,812.5 375.7,813.7 C393.9,815.0 425.9,817.6 451.0,820.5 C476.1,823.4 504.1,827.9 526.0,831.0 C547.9,834.1 563.6,836.9 582.4,839.3 C601.2,841.7 624.6,844.4 638.8,845.6 C653.0,846.9 657.5,846.9 667.7,846.8 C677.9,846.7 690.5,846.0 700.0,845.0 C709.5,844.0 715.0,842.0 725.0,841.0 C735.0,840.0 747.5,839.5 760.0,839.0 C772.5,838.5 788.3,838.1 800.0,837.8 C811.7,837.5 821.4,837.3 830.0,837.2 C838.6,837.1 848.2,837.0 851.8,837.0" fill="none" stroke="#e23a2c" stroke-width="3.3" stroke-linecap="round"/>
<path d="M38.0,853.6 C41.7,853.5 50.7,853.6 60.0,853.0 C69.3,852.4 79.0,851.8 94.0,849.8 C109.0,847.8 131.2,843.9 150.0,841.0 C168.8,838.1 187.9,835.0 206.7,832.5 C225.5,830.0 247.3,827.3 263.0,825.7 C278.6,824.1 289.0,823.5 300.6,823.0 C312.2,822.5 320.0,822.2 332.5,822.4 C345.0,822.6 356.0,822.8 375.7,824.2 C395.4,825.6 425.8,828.4 450.9,831.0 C475.9,833.6 504.1,837.2 526.0,840.0 C547.9,842.8 566.7,845.9 582.4,848.0 C598.1,850.1 610.1,851.5 620.0,852.4 C629.9,853.3 632.5,853.4 641.8,853.2 C651.1,853.0 666.3,852.0 676.0,851.3 C685.7,850.5 691.8,849.5 700.0,848.7 C708.2,848.0 715.0,847.7 725.0,846.8 C735.0,845.9 747.5,844.3 760.0,843.5 C772.5,842.7 788.3,842.1 800.0,841.9 C811.7,841.7 821.2,842.2 830.0,842.5 C838.8,842.8 843.8,843.3 853.0,843.8 C862.2,844.3 875.0,845.1 885.0,845.5 C895.0,845.9 902.1,846.2 913.0,846.0 C923.9,845.8 931.8,846.2 950.6,844.0 C969.4,841.8 1000.6,836.4 1025.7,832.5 C1050.8,828.6 1079.1,823.3 1101.0,820.5 C1122.9,817.7 1143.2,816.6 1157.0,815.6 C1170.8,814.6 1170.9,814.6 1183.5,814.8 C1196.1,815.0 1218.0,815.7 1232.4,816.7 C1246.8,817.7 1258.1,819.2 1270.0,820.6 C1281.9,822.0 1298.3,824.3 1304.0,825.0" fill="none" stroke="#2a12e0" stroke-width="3.2"/>
</g>
<ellipse cx="344.5" cy="816.8" rx="4.5" ry="3.5" fill="#000" opacity="0.35" filter="url(#fSoft)"/>
<circle cx="342" cy="813.3" r="4.6" fill="#d93a2d"/>
<circle cx="340.8" cy="811.9" r="1.9" fill="#f2a098" opacity="0.75"/>
<ellipse cx="670.2" cy="850.5" rx="4.5" ry="3.5" fill="#000" opacity="0.35" filter="url(#fSoft)"/>
<circle cx="667.7" cy="847" r="4.6" fill="#d93a2d"/>
<circle cx="666.5" cy="845.6" r="1.9" fill="#f2a098" opacity="0.75"/>
<ellipse cx="335.0" cy="826.1" rx="4.5" ry="3.5" fill="#000" opacity="0.35" filter="url(#fSoft)"/>
<circle cx="332.5" cy="822.6" r="4.6" fill="#3320e6"/>
<circle cx="331.3" cy="821.2" r="1.9" fill="#9c90ff" opacity="0.75"/>
<ellipse cx="644.3" cy="856.7" rx="4.5" ry="3.5" fill="#000" opacity="0.35" filter="url(#fSoft)"/>
<circle cx="641.8" cy="853.2" r="4.6" fill="#3320e6"/>
<circle cx="640.5999999999999" cy="851.8000000000001" r="1.9" fill="#9c90ff" opacity="0.75"/>
<ellipse cx="1186.3" cy="818.3" rx="4.5" ry="3.5" fill="#000" opacity="0.35" filter="url(#fSoft)"/>
<circle cx="1183.8" cy="814.8" r="4.6" fill="#3320e6"/>
<circle cx="1182.6" cy="813.4" r="1.9" fill="#9c90ff" opacity="0.75"/>
<path d="M852.5,638V908" stroke="#4a5a5c" stroke-opacity="0.62" stroke-width="2.1"/>
<rect x="38" y="638" width="1265" height="270" fill="none" stroke="#8c9090" stroke-opacity="0.6" stroke-width="2"/>
<path d="M109.0,909.5v3" stroke="#111" stroke-width="1.5"/>
<text x="93.8" y="928.0" font-size="12" font-weight="bold" fill="#f4f4f4" textLength="30.4" lengthAdjust="spacingAndGlyphs"  stroke="#f4f4f4" stroke-width="0.38" stroke-linejoin="round">02:00</text>
<path d="M249.5,909.5v3" stroke="#111" stroke-width="1.5"/>
<text x="234.3" y="928.0" font-size="12" font-weight="bold" fill="#f4f4f4" textLength="30.4" lengthAdjust="spacingAndGlyphs"  stroke="#f4f4f4" stroke-width="0.38" stroke-linejoin="round">04:00</text>
<path d="M390.0,909.5v3" stroke="#111" stroke-width="1.5"/>
<text x="374.8" y="928.0" font-size="12" font-weight="bold" fill="#f4f4f4" textLength="30.4" lengthAdjust="spacingAndGlyphs"  stroke="#f4f4f4" stroke-width="0.38" stroke-linejoin="round">06:00</text>
<path d="M530.5,909.5v3" stroke="#111" stroke-width="1.5"/>
<text x="515.3" y="928.0" font-size="12" font-weight="bold" fill="#f4f4f4" textLength="30.4" lengthAdjust="spacingAndGlyphs"  stroke="#f4f4f4" stroke-width="0.38" stroke-linejoin="round">08:00</text>
<path d="M671.0,909.5v3" stroke="#111" stroke-width="1.5"/>
<text x="655.8" y="928.0" font-size="12" font-weight="bold" fill="#f4f4f4" textLength="30.4" lengthAdjust="spacingAndGlyphs"  stroke="#f4f4f4" stroke-width="0.38" stroke-linejoin="round">10:00</text>
<path d="M811.5,909.5v3" stroke="#111" stroke-width="1.5"/>
<text x="796.3" y="928.0" font-size="12" font-weight="bold" fill="#f4f4f4" textLength="30.4" lengthAdjust="spacingAndGlyphs"  stroke="#f4f4f4" stroke-width="0.38" stroke-linejoin="round">12:00</text>
<path d="M952.0,909.5v3" stroke="#111" stroke-width="1.5"/>
<text x="936.8" y="928.0" font-size="12" font-weight="bold" fill="#f4f4f4" textLength="30.4" lengthAdjust="spacingAndGlyphs"  stroke="#f4f4f4" stroke-width="0.38" stroke-linejoin="round">14:00</text>
<path d="M1092.5,909.5v3" stroke="#111" stroke-width="1.5"/>
<text x="1077.3" y="928.0" font-size="12" font-weight="bold" fill="#f4f4f4" textLength="30.4" lengthAdjust="spacingAndGlyphs"  stroke="#f4f4f4" stroke-width="0.38" stroke-linejoin="round">16:00</text>
<path d="M1233.0,909.5v3" stroke="#111" stroke-width="1.5"/>
<text x="1217.8" y="928.0" font-size="12" font-weight="bold" fill="#f4f4f4" textLength="30.4" lengthAdjust="spacingAndGlyphs"  stroke="#f4f4f4" stroke-width="0.38" stroke-linejoin="round">18:00</text>
<text x="19.2" y="913.1" font-size="12" font-weight="bold" fill="#f4f4f4" textLength="11.0" lengthAdjust="spacingAndGlyphs"  stroke="#f4f4f4" stroke-width="0.38" stroke-linejoin="round">-1</text>
<text x="23.8" y="879.4" font-size="12" font-weight="bold" fill="#f4f4f4" textLength="6.4" lengthAdjust="spacingAndGlyphs"  stroke="#f4f4f4" stroke-width="0.38" stroke-linejoin="round">0</text>
<text x="23.8" y="845.6" font-size="12" font-weight="bold" fill="#f4f4f4" textLength="6.4" lengthAdjust="spacingAndGlyphs"  stroke="#f4f4f4" stroke-width="0.38" stroke-linejoin="round">1</text>
<text x="23.8" y="811.9" font-size="12" font-weight="bold" fill="#f4f4f4" textLength="6.4" lengthAdjust="spacingAndGlyphs"  stroke="#f4f4f4" stroke-width="0.38" stroke-linejoin="round">2</text>
<text x="23.8" y="778.1" font-size="12" font-weight="bold" fill="#f4f4f4" textLength="6.4" lengthAdjust="spacingAndGlyphs"  stroke="#f4f4f4" stroke-width="0.38" stroke-linejoin="round">3</text>
<text x="23.8" y="744.4" font-size="12" font-weight="bold" fill="#f4f4f4" textLength="6.4" lengthAdjust="spacingAndGlyphs"  stroke="#f4f4f4" stroke-width="0.38" stroke-linejoin="round">4</text>
<text x="23.8" y="710.6" font-size="12" font-weight="bold" fill="#f4f4f4" textLength="6.4" lengthAdjust="spacingAndGlyphs"  stroke="#f4f4f4" stroke-width="0.38" stroke-linejoin="round">5</text>
<text x="23.8" y="676.9" font-size="12" font-weight="bold" fill="#f4f4f4" textLength="6.4" lengthAdjust="spacingAndGlyphs"  stroke="#f4f4f4" stroke-width="0.38" stroke-linejoin="round">6</text>
<text x="23.8" y="643.1" font-size="12" font-weight="bold" fill="#f4f4f4" textLength="6.4" lengthAdjust="spacingAndGlyphs"  stroke="#f4f4f4" stroke-width="0.38" stroke-linejoin="round">7</text>
<circle cx="1709.8" cy="320.8" r="231.8" fill="#ffffff" opacity="0.2" filter="url(#fGlow2)"/>
<circle cx="1709.8" cy="320.8" r="228.8" fill="#ffffff" opacity="0.12" filter="url(#fGlow)"/>
<circle cx="1709.8" cy="320.8" r="227.8" fill="url(#gRim)" opacity="0.25" filter="url(#fGlow)"/>
<circle cx="1709.8" cy="320.8" r="226.8" fill="url(#gRim)"/>
<circle cx="1709.8" cy="320.8" r="222.0" fill="url(#gComp)"/>
<circle cx="1709.8" cy="320.8" r="221.3" fill="none" stroke="#7fd486" stroke-opacity="0.35" stroke-width="1.1"/>
<circle cx="1709.2" cy="320.2" r="62.4" fill="none" stroke="#3f6a48" stroke-opacity="0.6" stroke-width="1.1"/>
<circle cx="1709.2" cy="320.2" r="102.8" fill="none" stroke="#3f6a48" stroke-opacity="0.55" stroke-width="1.1"/>
<circle cx="1709.2" cy="320.2" r="143.2" fill="none" stroke="#2f7a3a" stroke-opacity="0.18" stroke-width="1.2"/>
<circle cx="1709.2" cy="320.2" r="183.6" fill="none" stroke="#8fd296" stroke-opacity="0.38" stroke-width="1.1"/>
<path d="M1606.4,320.2H1812.0M1709.2,217.4V423.0" stroke="#3f6a48" stroke-opacity="0.7" stroke-width="1.4" fill="none"/>
<path d="M1512.2,320.2H1606.4M1812.0,320.2H1906.2M1709.2,134.6V217.4M1709.2,423.0V505.8" stroke="#6f9a74" stroke-opacity="0.55" stroke-width="1.3" fill="none"/>
<path d="M1839.0,190.4L1848.5,180.9 M1839.0,450.0L1848.5,459.5 M1579.4,450.0L1569.9,459.5 M1579.4,190.4L1569.9,180.9" stroke="#8fd296" stroke-opacity="0.55" stroke-width="1.2" fill="none"/>
<path d="M1748.2,124.0L1751.1,109.3 M1785.7,135.4L1791.5,121.6 M1820.3,153.9L1828.6,141.4 M1875.5,209.1L1888.0,200.8 M1894.0,243.7L1907.8,237.9 M1905.4,281.2L1920.1,278.3 M1905.4,359.2L1920.1,362.1 M1894.0,396.7L1907.8,402.5 M1875.5,431.3L1888.0,439.6 M1820.3,486.5L1828.6,499.0 M1785.7,505.0L1791.5,518.8 M1748.2,516.4L1751.1,531.1 M1670.2,516.4L1667.3,531.1 M1632.7,505.0L1626.9,518.8 M1598.1,486.5L1589.8,499.0 M1542.9,431.3L1530.4,439.6 M1524.4,396.7L1510.6,402.5 M1513.0,359.2L1498.3,362.1 M1513.0,281.2L1498.3,278.3 M1524.4,243.7L1510.6,237.9 M1542.9,209.1L1530.4,200.8 M1598.1,153.9L1589.8,141.4 M1632.7,135.4L1626.9,121.6 M1670.2,124.0L1667.3,109.3" stroke="#a8e6ac" stroke-opacity="0.8" stroke-width="1.4" fill="none"/>
<circle cx="1562.9" cy="354.1" r="4.2" fill="#c6e838" opacity="0.5"/>
<circle cx="1571.4" cy="358.1" r="4.2" fill="#c6e838" opacity="0.35"/>
<circle cx="1583" cy="352.1" r="4.2" fill="#c6e838" opacity="0.4"/>
<circle cx="1578" cy="376.2" r="4.2" fill="#c6e838" opacity="0.75"/>
<circle cx="1594.5" cy="377.2" r="4.2" fill="#c6e838" opacity="0.8"/>
<circle cx="1613.6" cy="380.3" r="4.2" fill="#c6e838" opacity="0.95"/>
<circle cx="1570.4" cy="332.1" r="4.2" fill="#c6e838" opacity="0.1"/>
<circle cx="1583" cy="329.6" r="4.2" fill="#c6e838" opacity="0.08"/>
<text x="1700.7" y="134.2" font-size="13.5" font-weight="bold" fill="#e2f9e5" textLength="17.0" lengthAdjust="spacingAndGlyphs"  stroke="#e2f9e5" stroke-width="0.43" stroke-linejoin="round">20</text>
<text x="1700.7" y="174.4" font-size="13.5" font-weight="bold" fill="#e2f9e5" textLength="17.0" lengthAdjust="spacingAndGlyphs"  stroke="#e2f9e5" stroke-width="0.43" stroke-linejoin="round">15</text>
<text x="1700.7" y="214.3" font-size="13.5" font-weight="bold" fill="#e2f9e5" textLength="17.0" lengthAdjust="spacingAndGlyphs"  stroke="#e2f9e5" stroke-width="0.43" stroke-linejoin="round">10</text>
<text x="1705.0" y="253.2" font-size="13.5" font-weight="bold" fill="#e2f9e5" textLength="8.5" lengthAdjust="spacingAndGlyphs"  stroke="#e2f9e5" stroke-width="0.43" stroke-linejoin="round">5</text>
<text x="1705.0" y="395.7" font-size="13.5" font-weight="bold" fill="#e2f9e5" textLength="8.5" lengthAdjust="spacingAndGlyphs"  stroke="#e2f9e5" stroke-width="0.43" stroke-linejoin="round">5</text>
<text x="1700.7" y="435.9" font-size="13.5" font-weight="bold" fill="#e2f9e5" textLength="17.0" lengthAdjust="spacingAndGlyphs"  stroke="#e2f9e5" stroke-width="0.43" stroke-linejoin="round">10</text>
<text x="1700.7" y="475.9" font-size="13.5" font-weight="bold" fill="#e2f9e5" textLength="17.0" lengthAdjust="spacingAndGlyphs"  stroke="#e2f9e5" stroke-width="0.43" stroke-linejoin="round">15</text>
<text x="1700.7" y="515.4" font-size="13.5" font-weight="bold" fill="#e2f9e5" textLength="17.0" lengthAdjust="spacingAndGlyphs"  stroke="#e2f9e5" stroke-width="0.43" stroke-linejoin="round">20</text>
<g transform="translate(1709.2,110.5) rotate(0)">
<text x="-5.2" y="4.8" font-size="13.5" font-weight="bold" fill="#e2f9e5" textLength="10.3" lengthAdjust="spacingAndGlyphs"  stroke="#e2f9e5" stroke-width="0.43" stroke-linejoin="round">N</text>
</g>
<g transform="translate(1709.2,529.7) rotate(0)">
<text x="-4.8" y="4.8" font-size="13.5" font-weight="bold" fill="#e2f9e5" textLength="9.6" lengthAdjust="spacingAndGlyphs"  stroke="#e2f9e5" stroke-width="0.43" stroke-linejoin="round">S</text>
</g>
<g transform="translate(1918.5,320.2) rotate(0)">
<text x="-4.6" y="4.8" font-size="13.5" font-weight="bold" fill="#e2f9e5" textLength="9.2" lengthAdjust="spacingAndGlyphs"  stroke="#e2f9e5" stroke-width="0.43" stroke-linejoin="round">E</text>
</g>
<g transform="translate(1499.9,320.2) rotate(0)">
<text x="-7.2" y="4.8" font-size="13.5" font-weight="bold" fill="#e2f9e5" textLength="14.3" lengthAdjust="spacingAndGlyphs"  stroke="#e2f9e5" stroke-width="0.43" stroke-linejoin="round">W</text>
</g>
<g transform="translate(1857.3,172.1) rotate(45)">
<text x="-10.2" y="4.8" font-size="13.5" font-weight="bold" fill="#e2f9e5" textLength="20.5" lengthAdjust="spacingAndGlyphs"  stroke="#e2f9e5" stroke-width="0.43" stroke-linejoin="round">NE</text>
</g>
<g transform="translate(1857.3,468.3) rotate(-45)">
<text x="-9.8" y="4.8" font-size="13.5" font-weight="bold" fill="#e2f9e5" textLength="19.5" lengthAdjust="spacingAndGlyphs"  stroke="#e2f9e5" stroke-width="0.43" stroke-linejoin="round">SE</text>
</g>
<g transform="translate(1561.1,468.3) rotate(45)">
<text x="-12.0" y="4.8" font-size="13.5" font-weight="bold" fill="#e2f9e5" textLength="24.0" lengthAdjust="spacingAndGlyphs"  stroke="#e2f9e5" stroke-width="0.43" stroke-linejoin="round">SW</text>
</g>
<g transform="translate(1561.1,172.1) rotate(-45)">
<text x="-12.5" y="4.8" font-size="13.5" font-weight="bold" fill="#e2f9e5" textLength="25.0" lengthAdjust="spacingAndGlyphs"  stroke="#e2f9e5" stroke-width="0.43" stroke-linejoin="round">NW</text>
</g>
<path d="M1692.0,325.5L1611.7,350.0" stroke="#ea2e22" stroke-width="5.6" stroke-linecap="butt"/>
<circle cx="1711.7" cy="323.2" r="22.5" fill="#000" opacity="0.4" filter="url(#fSoft)"/>
<circle cx="1709.2" cy="320.2" r="22.5" fill="url(#gHub)"/>
<circle cx="1709.2" cy="319.7" r="7" fill="#ffffff" opacity="0.85" filter="url(#fSoft)"/>
<ellipse cx="2007.5" cy="26" rx="36" ry="20" transform="rotate(-14 2007.5 26)" fill="none" stroke="#c9ccd2" stroke-opacity="0.55" stroke-width="0.9"/>
<ellipse cx="2007.5" cy="26" rx="35" ry="17.5" transform="rotate(-20 2007.5 26)" fill="none" stroke="#c9ccd2" stroke-opacity="0.4" stroke-width="0.9"/>
<ellipse cx="2007.5" cy="26" rx="33.5" ry="20.5" transform="rotate(-9 2007.5 26)" fill="none" stroke="#c9ccd2" stroke-opacity="0.35" stroke-width="0.9"/>
<ellipse cx="2007.5" cy="26" rx="36.5" ry="16" transform="rotate(-24 2007.5 26)" fill="none" stroke="#c9ccd2" stroke-opacity="0.3" stroke-width="0.9"/>
<ellipse cx="2007.5" cy="26" rx="31" ry="18.5" transform="rotate(-16 2007.5 26)" fill="none" stroke="#c9ccd2" stroke-opacity="0.3" stroke-width="0.9"/>
<text x="1965.0" y="31.5" font-size="19" font-weight="normal" fill="#ffffff" textLength="80.5" lengthAdjust="spacingAndGlyphs" font-style="italic" stroke="#ffffff" stroke-width="0.60" stroke-linejoin="round">OceanWise</text>
</svg></body></html>
